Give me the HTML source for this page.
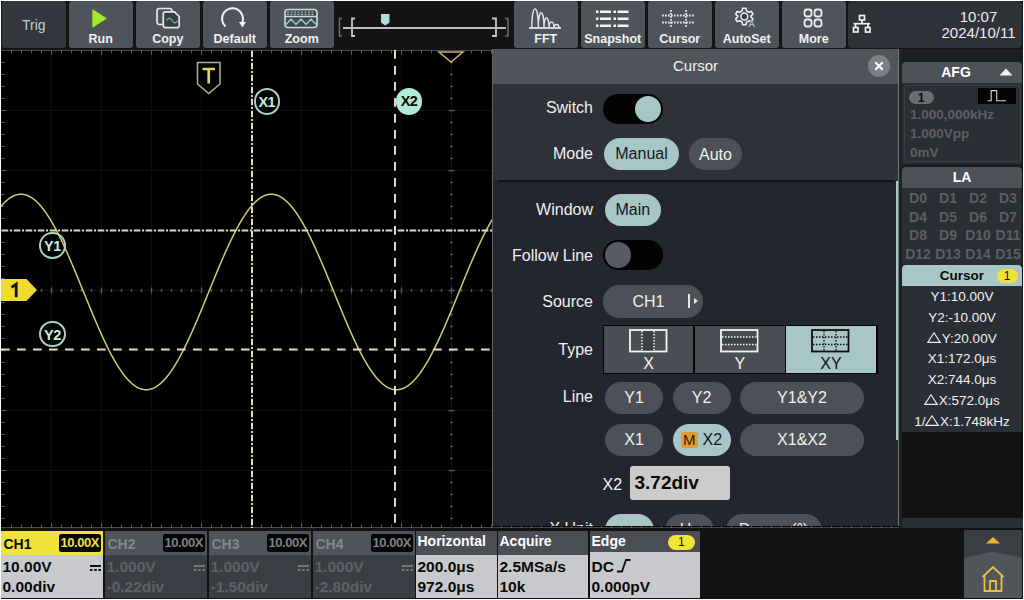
<!DOCTYPE html>
<html><head><meta charset="utf-8">
<style>
*{margin:0;padding:0;box-sizing:border-box}
html,body{width:1024px;height:600px;background:#fff;overflow:hidden}
body{font-family:"Liberation Sans",sans-serif;position:relative}
.a{position:absolute}
#root{position:absolute;left:1px;top:1px;width:1022px;height:598px;background:#121212;overflow:hidden}
.btn{position:absolute;top:1px;height:47px;width:63.5px;background:#4f535b;border-radius:3px;color:#f2f2f2;font-weight:bold;font-size:12.5px;text-align:center}
.btn .lb{position:absolute;left:0;right:0;top:31px;line-height:14px}
.btn svg{position:absolute;left:0;top:0}
.lbl{position:absolute;color:#f0f0f0;font-size:16px;text-align:right;line-height:18px}
.pill{position:absolute;height:32px;border-radius:16px;background:#4d5157;color:#f0f0f0;font-size:16px;text-align:center;line-height:32px}
.pill.on{background:#a9c6c6;color:#0f171c}
.mk{position:absolute;border-radius:50%;font-weight:bold;font-size:14.5px;text-align:center;letter-spacing:-0.5px}
.chp{position:absolute;top:531px;height:67px}
.chp .hd{position:absolute;left:0;right:0;top:0;height:24px;background:#50545a}
.chp .bd{position:absolute;left:0;right:0;top:24px;bottom:0;background:#3a3d43}
.chp .t{position:absolute;font-weight:bold;font-size:14px;line-height:16px;white-space:nowrap}
.chp .v{position:absolute;font-weight:bold;font-size:15.5px;line-height:17px;white-space:nowrap}
.rp{position:absolute;left:902px;width:120px}
.cv{position:absolute;left:902px;width:120px;text-align:center;color:#f0f0f0;font-size:13.5px;line-height:16px;white-space:nowrap}
.dl{position:absolute;font-weight:bold;font-size:14px;color:#5b5e63;text-align:center;width:30px;line-height:16px}
</style></head><body>
<div id="root"></div>
<!-- top toolbar -->
<div class="a" style="left:1px;top:1px;width:1022px;height:49px;background:#141414"></div>
<div class="btn" style="left:2px;background:#34373d;font-weight:normal;color:#b8d2cf;font-size:14px"><div class="lb" style="top:17px">Trig</div></div>
<div class="btn" style="left:69px">
<svg width="64" height="47"><path d="M23.8,8.8 L37.3,17.4 L23.8,26.2 Z" fill="#a4ea2c" stroke="#a4ea2c" stroke-width="0.8" stroke-linejoin="round"/></svg>
<div class="lb">Run</div></div>
<div class="btn" style="left:136px">
<svg width="64" height="47"><path d="M27,23.5 H23.5 a2.5,2.5 0 0 1 -2.5,-2.5 V10 a2.5,2.5 0 0 1 2.5,-2.5 H33.5 a2.5,2.5 0 0 1 2.5,2.5 V10.8" fill="none" stroke="#e6e6e6" stroke-width="1.7"/><path d="M29.5,10.8 H38.5 L43.2,15.5 V24.5 a2.2,2.2 0 0 1 -2.2,2.2 H29.5 a2.2,2.2 0 0 1 -2.2,-2.2 V13 a2.2,2.2 0 0 1 2.2,-2.2 Z" fill="#33403f" stroke="#e6e6e6" stroke-width="1.7"/><path d="M30.5,19.5 q2.8,-4.5 5.6,0 t5.6,0" fill="none" stroke="#7fa8a4" stroke-width="1.3"/></svg>
<div class="lb">Copy</div></div>
<div class="btn" style="left:203px">
<svg width="64" height="47"><path d="M22.5,25.5 A10.5,10.5 0 1 1 39.3,21.5" fill="none" stroke="#f2f2f2" stroke-width="2"/><path d="M36,21 L43,21 L39.5,26.5 Z" fill="#f2f2f2"/></svg>
<div class="lb">Default</div></div>
<div class="btn" style="left:270px">
<svg width="64" height="47"><rect x="15" y="8.5" width="32" height="18" rx="3" fill="#3b4a4c" stroke="#cddada" stroke-width="1.6"/><line x1="15" y1="15.5" x2="47" y2="15.5" stroke="#cddada" stroke-width="1.5"/><line x1="17" y1="11.2" x2="45" y2="11.2" stroke="#9fb0b0" stroke-width="1.2" stroke-dasharray="2 1.5"/><line x1="17" y1="13.4" x2="45" y2="13.4" stroke="#9fb0b0" stroke-width="1.2" stroke-dasharray="2 1.5"/><path d="M16,23.5 L21,18 L26,23.5 L31,18 L36,23.5 L41,18 L46,23.5" fill="none" stroke="#9cc8c4" stroke-width="1.5"/></svg>
<div class="lb">Zoom</div></div>
<!-- slider -->
<svg class="a" style="left:336px;top:1px" width="176" height="47">
<path d="M6,17.5 H3.5 V35 H6" fill="none" stroke="#6b6b6b" stroke-width="1.5"/>
<path d="M19,17.5 H16 V35 H19" fill="none" stroke="#c8c8c8" stroke-width="1.8"/>
<path d="M156,17.5 H160 V35 H156" fill="none" stroke="#c8c8c8" stroke-width="1.8"/>
<path d="M169,17.5 H172 V35 H169" fill="none" stroke="#6b6b6b" stroke-width="1.5"/>
<line x1="7" y1="27" x2="170" y2="27" stroke="#bdbdbd" stroke-width="2"/>
<path d="M45,13 H53.5 V21.5 L49.2,24.5 L45,21.5 Z" fill="#a9e0d8"/>
</svg>
<div class="btn" style="left:514px">
<svg width="64" height="47"><line x1="15" y1="27" x2="47" y2="27" stroke="#dfe4e4" stroke-width="1.8"/><path d="M17.8,27 C17.8,1.5 24.3,1.5 24.3,27 C24.3,6.6 30,6.6 30,27 C30,13.3 35,13.3 35,27 C35,19.0 40,19.0 40,27 C40,22.3 45,22.3 45,27 " fill="none" stroke="#dfe4e4" stroke-width="1.4"/></svg>
<div class="lb">FFT</div></div>
<div class="btn" style="left:581px">
<svg width="64" height="47"><g fill="#f4f4f4"><rect x="15" y="9.5" width="2.5" height="2.5"/><rect x="19" y="9.5" width="11" height="2.5"/><rect x="32.5" y="9.5" width="2.5" height="2.5"/><rect x="36.5" y="9.5" width="11" height="2.5"/><rect x="15" y="16.5" width="2.5" height="2.5"/><rect x="19" y="16.5" width="11" height="2.5"/><rect x="32.5" y="16.5" width="2.5" height="2.5"/><rect x="36.5" y="16.5" width="11" height="2.5"/><rect x="15" y="23.5" width="2.5" height="2.5"/><rect x="19" y="23.5" width="11" height="2.5"/><rect x="32.5" y="23.5" width="2.5" height="2.5"/><rect x="36.5" y="23.5" width="11" height="2.5"/></g></svg>
<div class="lb">Snapshot</div></div>
<div class="btn" style="left:648px">
<svg width="64" height="47"><g stroke="#dfe6e6" stroke-width="1.8" stroke-dasharray="1.8 1.2"><line x1="14" y1="14.5" x2="47" y2="14.5"/><line x1="14" y1="21.5" x2="47" y2="21.5"/><line x1="23" y1="9" x2="23" y2="27"/><line x1="38" y1="9" x2="38" y2="27"/></g></svg>
<div class="lb">Cursor</div></div>
<div class="btn" style="left:715px">
<svg width="64" height="47"><g transform="translate(29.3,15.5)"><path d="M-1.6,-8.2 L1.6,-8.2 L2.3,-5.6 L4.6,-4.3 L7.1,-5.1 L8.7,-2.4 L6.7,-0.6 L6.7,0.6 L8.7,2.4 L7.1,5.1 L4.6,4.3 L2.3,5.6 L1.6,8.2 L-1.6,8.2 L-2.3,5.6 L-4.6,4.3 L-7.1,5.1 L-8.7,2.4 L-6.7,0.6 L-6.7,-0.6 L-8.7,-2.4 L-7.1,-5.1 L-4.6,-4.3 L-2.3,-5.6 Z" fill="none" stroke="#ececec" stroke-width="1.6" stroke-linejoin="round"/><circle r="3.4" fill="#3a3d42" stroke="#ececec" stroke-width="1.5"/></g><text x="33.3" y="26.2" font-family="Liberation Sans" font-weight="bold" font-size="9.5" fill="#8fd8c0" stroke="#3a3d42" stroke-width="0.6" paint-order="stroke">A</text></svg>
<div class="lb">AutoSet</div></div>
<div class="btn" style="left:782px">
<svg width="64" height="47"><g fill="none" stroke="#ececec" stroke-width="1.8"><rect x="22.5" y="8.5" width="7" height="7" rx="2.5"/><rect x="32.5" y="8.5" width="7" height="7" rx="2.5"/><rect x="22.5" y="18.5" width="7" height="7" rx="2.5"/><rect x="32.5" y="18.5" width="7" height="7" rx="2.5"/></g></svg>
<div class="lb">More</div></div>
<div class="a" style="left:848px;top:1px;width:173.5px;height:47px;background:#2f3238;border-radius:4px">
<svg class="a" style="left:0;top:0" width="40" height="47"><g fill="none" stroke="#f0f0f0" stroke-width="1.7"><rect x="11.5" y="14.5" width="5" height="4.5"/><line x1="14" y1="19" x2="14" y2="22.7"/><line x1="5.5" y1="22.7" x2="22" y2="22.7"/><line x1="7.5" y1="22.7" x2="7.5" y2="26.5"/><line x1="20" y1="22.7" x2="20" y2="26.5"/><rect x="5.5" y="26.5" width="4.5" height="4.5"/><rect x="17.5" y="26.5" width="4.5" height="4.5"/></g></svg>
<div class="a" style="left:80px;width:101px;top:8px;color:#ececec;font-size:15px;line-height:16px;text-align:center">10:07<br>2024/10/11</div>
</div>

<!-- grid -->
<div class="a" style="left:1px;top:50px;width:900px;height:478px;background:#000"></div>
<svg width="900" height="478" style="position:absolute;left:1px;top:50px">
<line x1="50.5" y1="0" x2="50.5" y2="478" stroke="#0e0e0e" stroke-width="1"/>
<line x1="100.5" y1="0" x2="100.5" y2="478" stroke="#0e0e0e" stroke-width="1"/>
<line x1="150.5" y1="0" x2="150.5" y2="478" stroke="#0e0e0e" stroke-width="1"/>
<line x1="200.5" y1="0" x2="200.5" y2="478" stroke="#0e0e0e" stroke-width="1"/>
<line x1="250.5" y1="0" x2="250.5" y2="478" stroke="#0e0e0e" stroke-width="1"/>
<line x1="300.5" y1="0" x2="300.5" y2="478" stroke="#0e0e0e" stroke-width="1"/>
<line x1="350.5" y1="0" x2="350.5" y2="478" stroke="#0e0e0e" stroke-width="1"/>
<line x1="400.5" y1="0" x2="400.5" y2="478" stroke="#0e0e0e" stroke-width="1"/>
<line x1="450.5" y1="0" x2="450.5" y2="478" stroke="#0e0e0e" stroke-width="1"/>
<line x1="500.5" y1="0" x2="500.5" y2="478" stroke="#0e0e0e" stroke-width="1"/>
<line x1="550.5" y1="0" x2="550.5" y2="478" stroke="#0e0e0e" stroke-width="1"/>
<line x1="600.5" y1="0" x2="600.5" y2="478" stroke="#0e0e0e" stroke-width="1"/>
<line x1="650.5" y1="0" x2="650.5" y2="478" stroke="#0e0e0e" stroke-width="1"/>
<line x1="700.5" y1="0" x2="700.5" y2="478" stroke="#0e0e0e" stroke-width="1"/>
<line x1="750.5" y1="0" x2="750.5" y2="478" stroke="#0e0e0e" stroke-width="1"/>
<line x1="800.5" y1="0" x2="800.5" y2="478" stroke="#0e0e0e" stroke-width="1"/>
<line x1="850.5" y1="0" x2="850.5" y2="478" stroke="#0e0e0e" stroke-width="1"/>
<line x1="0" y1="60.5" x2="900" y2="60.5" stroke="#0e0e0e" stroke-width="1"/>
<line x1="0" y1="120.5" x2="900" y2="120.5" stroke="#0e0e0e" stroke-width="1"/>
<line x1="0" y1="180.5" x2="900" y2="180.5" stroke="#0e0e0e" stroke-width="1"/>
<line x1="0" y1="240.5" x2="900" y2="240.5" stroke="#0e0e0e" stroke-width="1"/>
<line x1="0" y1="300.5" x2="900" y2="300.5" stroke="#0e0e0e" stroke-width="1"/>
<line x1="0" y1="360.5" x2="900" y2="360.5" stroke="#0e0e0e" stroke-width="1"/>
<line x1="0" y1="420.5" x2="900" y2="420.5" stroke="#0e0e0e" stroke-width="1"/>
<line x1="0" y1="0.5" x2="900" y2="0.5" stroke="#4a4a4a" stroke-width="1"/>
<line x1="0" y1="477.5" x2="900" y2="477.5" stroke="#4a4a4a" stroke-width="1"/>
<line x1="899.5" y1="0" x2="899.5" y2="478" stroke="#4a4a4a" stroke-width="1"/>
<line x1="10.5" y1="0" x2="10.5" y2="3.5" stroke="#5c5c5c" stroke-width="1"/>
<line x1="10.5" y1="478" x2="10.5" y2="474.5" stroke="#5c5c5c" stroke-width="1"/>
<line x1="20.5" y1="0" x2="20.5" y2="3.5" stroke="#5c5c5c" stroke-width="1"/>
<line x1="20.5" y1="478" x2="20.5" y2="474.5" stroke="#5c5c5c" stroke-width="1"/>
<line x1="30.5" y1="0" x2="30.5" y2="3.5" stroke="#5c5c5c" stroke-width="1"/>
<line x1="30.5" y1="478" x2="30.5" y2="474.5" stroke="#5c5c5c" stroke-width="1"/>
<line x1="40.5" y1="0" x2="40.5" y2="3.5" stroke="#5c5c5c" stroke-width="1"/>
<line x1="40.5" y1="478" x2="40.5" y2="474.5" stroke="#5c5c5c" stroke-width="1"/>
<line x1="50.5" y1="0" x2="50.5" y2="5" stroke="#5c5c5c" stroke-width="1"/>
<line x1="50.5" y1="478" x2="50.5" y2="473" stroke="#5c5c5c" stroke-width="1"/>
<line x1="60.5" y1="0" x2="60.5" y2="3.5" stroke="#5c5c5c" stroke-width="1"/>
<line x1="60.5" y1="478" x2="60.5" y2="474.5" stroke="#5c5c5c" stroke-width="1"/>
<line x1="70.5" y1="0" x2="70.5" y2="3.5" stroke="#5c5c5c" stroke-width="1"/>
<line x1="70.5" y1="478" x2="70.5" y2="474.5" stroke="#5c5c5c" stroke-width="1"/>
<line x1="80.5" y1="0" x2="80.5" y2="3.5" stroke="#5c5c5c" stroke-width="1"/>
<line x1="80.5" y1="478" x2="80.5" y2="474.5" stroke="#5c5c5c" stroke-width="1"/>
<line x1="90.5" y1="0" x2="90.5" y2="3.5" stroke="#5c5c5c" stroke-width="1"/>
<line x1="90.5" y1="478" x2="90.5" y2="474.5" stroke="#5c5c5c" stroke-width="1"/>
<line x1="100.5" y1="0" x2="100.5" y2="5" stroke="#5c5c5c" stroke-width="1"/>
<line x1="100.5" y1="478" x2="100.5" y2="473" stroke="#5c5c5c" stroke-width="1"/>
<line x1="110.5" y1="0" x2="110.5" y2="3.5" stroke="#5c5c5c" stroke-width="1"/>
<line x1="110.5" y1="478" x2="110.5" y2="474.5" stroke="#5c5c5c" stroke-width="1"/>
<line x1="120.5" y1="0" x2="120.5" y2="3.5" stroke="#5c5c5c" stroke-width="1"/>
<line x1="120.5" y1="478" x2="120.5" y2="474.5" stroke="#5c5c5c" stroke-width="1"/>
<line x1="130.5" y1="0" x2="130.5" y2="3.5" stroke="#5c5c5c" stroke-width="1"/>
<line x1="130.5" y1="478" x2="130.5" y2="474.5" stroke="#5c5c5c" stroke-width="1"/>
<line x1="140.5" y1="0" x2="140.5" y2="3.5" stroke="#5c5c5c" stroke-width="1"/>
<line x1="140.5" y1="478" x2="140.5" y2="474.5" stroke="#5c5c5c" stroke-width="1"/>
<line x1="150.5" y1="0" x2="150.5" y2="5" stroke="#5c5c5c" stroke-width="1"/>
<line x1="150.5" y1="478" x2="150.5" y2="473" stroke="#5c5c5c" stroke-width="1"/>
<line x1="160.5" y1="0" x2="160.5" y2="3.5" stroke="#5c5c5c" stroke-width="1"/>
<line x1="160.5" y1="478" x2="160.5" y2="474.5" stroke="#5c5c5c" stroke-width="1"/>
<line x1="170.5" y1="0" x2="170.5" y2="3.5" stroke="#5c5c5c" stroke-width="1"/>
<line x1="170.5" y1="478" x2="170.5" y2="474.5" stroke="#5c5c5c" stroke-width="1"/>
<line x1="180.5" y1="0" x2="180.5" y2="3.5" stroke="#5c5c5c" stroke-width="1"/>
<line x1="180.5" y1="478" x2="180.5" y2="474.5" stroke="#5c5c5c" stroke-width="1"/>
<line x1="190.5" y1="0" x2="190.5" y2="3.5" stroke="#5c5c5c" stroke-width="1"/>
<line x1="190.5" y1="478" x2="190.5" y2="474.5" stroke="#5c5c5c" stroke-width="1"/>
<line x1="200.5" y1="0" x2="200.5" y2="5" stroke="#5c5c5c" stroke-width="1"/>
<line x1="200.5" y1="478" x2="200.5" y2="473" stroke="#5c5c5c" stroke-width="1"/>
<line x1="210.5" y1="0" x2="210.5" y2="3.5" stroke="#5c5c5c" stroke-width="1"/>
<line x1="210.5" y1="478" x2="210.5" y2="474.5" stroke="#5c5c5c" stroke-width="1"/>
<line x1="220.5" y1="0" x2="220.5" y2="3.5" stroke="#5c5c5c" stroke-width="1"/>
<line x1="220.5" y1="478" x2="220.5" y2="474.5" stroke="#5c5c5c" stroke-width="1"/>
<line x1="230.5" y1="0" x2="230.5" y2="3.5" stroke="#5c5c5c" stroke-width="1"/>
<line x1="230.5" y1="478" x2="230.5" y2="474.5" stroke="#5c5c5c" stroke-width="1"/>
<line x1="240.5" y1="0" x2="240.5" y2="3.5" stroke="#5c5c5c" stroke-width="1"/>
<line x1="240.5" y1="478" x2="240.5" y2="474.5" stroke="#5c5c5c" stroke-width="1"/>
<line x1="250.5" y1="0" x2="250.5" y2="5" stroke="#5c5c5c" stroke-width="1"/>
<line x1="250.5" y1="478" x2="250.5" y2="473" stroke="#5c5c5c" stroke-width="1"/>
<line x1="260.5" y1="0" x2="260.5" y2="3.5" stroke="#5c5c5c" stroke-width="1"/>
<line x1="260.5" y1="478" x2="260.5" y2="474.5" stroke="#5c5c5c" stroke-width="1"/>
<line x1="270.5" y1="0" x2="270.5" y2="3.5" stroke="#5c5c5c" stroke-width="1"/>
<line x1="270.5" y1="478" x2="270.5" y2="474.5" stroke="#5c5c5c" stroke-width="1"/>
<line x1="280.5" y1="0" x2="280.5" y2="3.5" stroke="#5c5c5c" stroke-width="1"/>
<line x1="280.5" y1="478" x2="280.5" y2="474.5" stroke="#5c5c5c" stroke-width="1"/>
<line x1="290.5" y1="0" x2="290.5" y2="3.5" stroke="#5c5c5c" stroke-width="1"/>
<line x1="290.5" y1="478" x2="290.5" y2="474.5" stroke="#5c5c5c" stroke-width="1"/>
<line x1="300.5" y1="0" x2="300.5" y2="5" stroke="#5c5c5c" stroke-width="1"/>
<line x1="300.5" y1="478" x2="300.5" y2="473" stroke="#5c5c5c" stroke-width="1"/>
<line x1="310.5" y1="0" x2="310.5" y2="3.5" stroke="#5c5c5c" stroke-width="1"/>
<line x1="310.5" y1="478" x2="310.5" y2="474.5" stroke="#5c5c5c" stroke-width="1"/>
<line x1="320.5" y1="0" x2="320.5" y2="3.5" stroke="#5c5c5c" stroke-width="1"/>
<line x1="320.5" y1="478" x2="320.5" y2="474.5" stroke="#5c5c5c" stroke-width="1"/>
<line x1="330.5" y1="0" x2="330.5" y2="3.5" stroke="#5c5c5c" stroke-width="1"/>
<line x1="330.5" y1="478" x2="330.5" y2="474.5" stroke="#5c5c5c" stroke-width="1"/>
<line x1="340.5" y1="0" x2="340.5" y2="3.5" stroke="#5c5c5c" stroke-width="1"/>
<line x1="340.5" y1="478" x2="340.5" y2="474.5" stroke="#5c5c5c" stroke-width="1"/>
<line x1="350.5" y1="0" x2="350.5" y2="5" stroke="#5c5c5c" stroke-width="1"/>
<line x1="350.5" y1="478" x2="350.5" y2="473" stroke="#5c5c5c" stroke-width="1"/>
<line x1="360.5" y1="0" x2="360.5" y2="3.5" stroke="#5c5c5c" stroke-width="1"/>
<line x1="360.5" y1="478" x2="360.5" y2="474.5" stroke="#5c5c5c" stroke-width="1"/>
<line x1="370.5" y1="0" x2="370.5" y2="3.5" stroke="#5c5c5c" stroke-width="1"/>
<line x1="370.5" y1="478" x2="370.5" y2="474.5" stroke="#5c5c5c" stroke-width="1"/>
<line x1="380.5" y1="0" x2="380.5" y2="3.5" stroke="#5c5c5c" stroke-width="1"/>
<line x1="380.5" y1="478" x2="380.5" y2="474.5" stroke="#5c5c5c" stroke-width="1"/>
<line x1="390.5" y1="0" x2="390.5" y2="3.5" stroke="#5c5c5c" stroke-width="1"/>
<line x1="390.5" y1="478" x2="390.5" y2="474.5" stroke="#5c5c5c" stroke-width="1"/>
<line x1="400.5" y1="0" x2="400.5" y2="5" stroke="#5c5c5c" stroke-width="1"/>
<line x1="400.5" y1="478" x2="400.5" y2="473" stroke="#5c5c5c" stroke-width="1"/>
<line x1="410.5" y1="0" x2="410.5" y2="3.5" stroke="#5c5c5c" stroke-width="1"/>
<line x1="410.5" y1="478" x2="410.5" y2="474.5" stroke="#5c5c5c" stroke-width="1"/>
<line x1="420.5" y1="0" x2="420.5" y2="3.5" stroke="#5c5c5c" stroke-width="1"/>
<line x1="420.5" y1="478" x2="420.5" y2="474.5" stroke="#5c5c5c" stroke-width="1"/>
<line x1="430.5" y1="0" x2="430.5" y2="3.5" stroke="#5c5c5c" stroke-width="1"/>
<line x1="430.5" y1="478" x2="430.5" y2="474.5" stroke="#5c5c5c" stroke-width="1"/>
<line x1="440.5" y1="0" x2="440.5" y2="3.5" stroke="#5c5c5c" stroke-width="1"/>
<line x1="440.5" y1="478" x2="440.5" y2="474.5" stroke="#5c5c5c" stroke-width="1"/>
<line x1="450.5" y1="0" x2="450.5" y2="5" stroke="#5c5c5c" stroke-width="1"/>
<line x1="450.5" y1="478" x2="450.5" y2="473" stroke="#5c5c5c" stroke-width="1"/>
<line x1="460.5" y1="0" x2="460.5" y2="3.5" stroke="#5c5c5c" stroke-width="1"/>
<line x1="460.5" y1="478" x2="460.5" y2="474.5" stroke="#5c5c5c" stroke-width="1"/>
<line x1="470.5" y1="0" x2="470.5" y2="3.5" stroke="#5c5c5c" stroke-width="1"/>
<line x1="470.5" y1="478" x2="470.5" y2="474.5" stroke="#5c5c5c" stroke-width="1"/>
<line x1="480.5" y1="0" x2="480.5" y2="3.5" stroke="#5c5c5c" stroke-width="1"/>
<line x1="480.5" y1="478" x2="480.5" y2="474.5" stroke="#5c5c5c" stroke-width="1"/>
<line x1="490.5" y1="0" x2="490.5" y2="3.5" stroke="#5c5c5c" stroke-width="1"/>
<line x1="490.5" y1="478" x2="490.5" y2="474.5" stroke="#5c5c5c" stroke-width="1"/>
<line x1="500.5" y1="0" x2="500.5" y2="5" stroke="#5c5c5c" stroke-width="1"/>
<line x1="500.5" y1="478" x2="500.5" y2="473" stroke="#5c5c5c" stroke-width="1"/>
<line x1="510.5" y1="0" x2="510.5" y2="3.5" stroke="#5c5c5c" stroke-width="1"/>
<line x1="510.5" y1="478" x2="510.5" y2="474.5" stroke="#5c5c5c" stroke-width="1"/>
<line x1="520.5" y1="0" x2="520.5" y2="3.5" stroke="#5c5c5c" stroke-width="1"/>
<line x1="520.5" y1="478" x2="520.5" y2="474.5" stroke="#5c5c5c" stroke-width="1"/>
<line x1="530.5" y1="0" x2="530.5" y2="3.5" stroke="#5c5c5c" stroke-width="1"/>
<line x1="530.5" y1="478" x2="530.5" y2="474.5" stroke="#5c5c5c" stroke-width="1"/>
<line x1="540.5" y1="0" x2="540.5" y2="3.5" stroke="#5c5c5c" stroke-width="1"/>
<line x1="540.5" y1="478" x2="540.5" y2="474.5" stroke="#5c5c5c" stroke-width="1"/>
<line x1="550.5" y1="0" x2="550.5" y2="5" stroke="#5c5c5c" stroke-width="1"/>
<line x1="550.5" y1="478" x2="550.5" y2="473" stroke="#5c5c5c" stroke-width="1"/>
<line x1="560.5" y1="0" x2="560.5" y2="3.5" stroke="#5c5c5c" stroke-width="1"/>
<line x1="560.5" y1="478" x2="560.5" y2="474.5" stroke="#5c5c5c" stroke-width="1"/>
<line x1="570.5" y1="0" x2="570.5" y2="3.5" stroke="#5c5c5c" stroke-width="1"/>
<line x1="570.5" y1="478" x2="570.5" y2="474.5" stroke="#5c5c5c" stroke-width="1"/>
<line x1="580.5" y1="0" x2="580.5" y2="3.5" stroke="#5c5c5c" stroke-width="1"/>
<line x1="580.5" y1="478" x2="580.5" y2="474.5" stroke="#5c5c5c" stroke-width="1"/>
<line x1="590.5" y1="0" x2="590.5" y2="3.5" stroke="#5c5c5c" stroke-width="1"/>
<line x1="590.5" y1="478" x2="590.5" y2="474.5" stroke="#5c5c5c" stroke-width="1"/>
<line x1="600.5" y1="0" x2="600.5" y2="5" stroke="#5c5c5c" stroke-width="1"/>
<line x1="600.5" y1="478" x2="600.5" y2="473" stroke="#5c5c5c" stroke-width="1"/>
<line x1="610.5" y1="0" x2="610.5" y2="3.5" stroke="#5c5c5c" stroke-width="1"/>
<line x1="610.5" y1="478" x2="610.5" y2="474.5" stroke="#5c5c5c" stroke-width="1"/>
<line x1="620.5" y1="0" x2="620.5" y2="3.5" stroke="#5c5c5c" stroke-width="1"/>
<line x1="620.5" y1="478" x2="620.5" y2="474.5" stroke="#5c5c5c" stroke-width="1"/>
<line x1="630.5" y1="0" x2="630.5" y2="3.5" stroke="#5c5c5c" stroke-width="1"/>
<line x1="630.5" y1="478" x2="630.5" y2="474.5" stroke="#5c5c5c" stroke-width="1"/>
<line x1="640.5" y1="0" x2="640.5" y2="3.5" stroke="#5c5c5c" stroke-width="1"/>
<line x1="640.5" y1="478" x2="640.5" y2="474.5" stroke="#5c5c5c" stroke-width="1"/>
<line x1="650.5" y1="0" x2="650.5" y2="5" stroke="#5c5c5c" stroke-width="1"/>
<line x1="650.5" y1="478" x2="650.5" y2="473" stroke="#5c5c5c" stroke-width="1"/>
<line x1="660.5" y1="0" x2="660.5" y2="3.5" stroke="#5c5c5c" stroke-width="1"/>
<line x1="660.5" y1="478" x2="660.5" y2="474.5" stroke="#5c5c5c" stroke-width="1"/>
<line x1="670.5" y1="0" x2="670.5" y2="3.5" stroke="#5c5c5c" stroke-width="1"/>
<line x1="670.5" y1="478" x2="670.5" y2="474.5" stroke="#5c5c5c" stroke-width="1"/>
<line x1="680.5" y1="0" x2="680.5" y2="3.5" stroke="#5c5c5c" stroke-width="1"/>
<line x1="680.5" y1="478" x2="680.5" y2="474.5" stroke="#5c5c5c" stroke-width="1"/>
<line x1="690.5" y1="0" x2="690.5" y2="3.5" stroke="#5c5c5c" stroke-width="1"/>
<line x1="690.5" y1="478" x2="690.5" y2="474.5" stroke="#5c5c5c" stroke-width="1"/>
<line x1="700.5" y1="0" x2="700.5" y2="5" stroke="#5c5c5c" stroke-width="1"/>
<line x1="700.5" y1="478" x2="700.5" y2="473" stroke="#5c5c5c" stroke-width="1"/>
<line x1="710.5" y1="0" x2="710.5" y2="3.5" stroke="#5c5c5c" stroke-width="1"/>
<line x1="710.5" y1="478" x2="710.5" y2="474.5" stroke="#5c5c5c" stroke-width="1"/>
<line x1="720.5" y1="0" x2="720.5" y2="3.5" stroke="#5c5c5c" stroke-width="1"/>
<line x1="720.5" y1="478" x2="720.5" y2="474.5" stroke="#5c5c5c" stroke-width="1"/>
<line x1="730.5" y1="0" x2="730.5" y2="3.5" stroke="#5c5c5c" stroke-width="1"/>
<line x1="730.5" y1="478" x2="730.5" y2="474.5" stroke="#5c5c5c" stroke-width="1"/>
<line x1="740.5" y1="0" x2="740.5" y2="3.5" stroke="#5c5c5c" stroke-width="1"/>
<line x1="740.5" y1="478" x2="740.5" y2="474.5" stroke="#5c5c5c" stroke-width="1"/>
<line x1="750.5" y1="0" x2="750.5" y2="5" stroke="#5c5c5c" stroke-width="1"/>
<line x1="750.5" y1="478" x2="750.5" y2="473" stroke="#5c5c5c" stroke-width="1"/>
<line x1="760.5" y1="0" x2="760.5" y2="3.5" stroke="#5c5c5c" stroke-width="1"/>
<line x1="760.5" y1="478" x2="760.5" y2="474.5" stroke="#5c5c5c" stroke-width="1"/>
<line x1="770.5" y1="0" x2="770.5" y2="3.5" stroke="#5c5c5c" stroke-width="1"/>
<line x1="770.5" y1="478" x2="770.5" y2="474.5" stroke="#5c5c5c" stroke-width="1"/>
<line x1="780.5" y1="0" x2="780.5" y2="3.5" stroke="#5c5c5c" stroke-width="1"/>
<line x1="780.5" y1="478" x2="780.5" y2="474.5" stroke="#5c5c5c" stroke-width="1"/>
<line x1="790.5" y1="0" x2="790.5" y2="3.5" stroke="#5c5c5c" stroke-width="1"/>
<line x1="790.5" y1="478" x2="790.5" y2="474.5" stroke="#5c5c5c" stroke-width="1"/>
<line x1="800.5" y1="0" x2="800.5" y2="5" stroke="#5c5c5c" stroke-width="1"/>
<line x1="800.5" y1="478" x2="800.5" y2="473" stroke="#5c5c5c" stroke-width="1"/>
<line x1="810.5" y1="0" x2="810.5" y2="3.5" stroke="#5c5c5c" stroke-width="1"/>
<line x1="810.5" y1="478" x2="810.5" y2="474.5" stroke="#5c5c5c" stroke-width="1"/>
<line x1="820.5" y1="0" x2="820.5" y2="3.5" stroke="#5c5c5c" stroke-width="1"/>
<line x1="820.5" y1="478" x2="820.5" y2="474.5" stroke="#5c5c5c" stroke-width="1"/>
<line x1="830.5" y1="0" x2="830.5" y2="3.5" stroke="#5c5c5c" stroke-width="1"/>
<line x1="830.5" y1="478" x2="830.5" y2="474.5" stroke="#5c5c5c" stroke-width="1"/>
<line x1="840.5" y1="0" x2="840.5" y2="3.5" stroke="#5c5c5c" stroke-width="1"/>
<line x1="840.5" y1="478" x2="840.5" y2="474.5" stroke="#5c5c5c" stroke-width="1"/>
<line x1="850.5" y1="0" x2="850.5" y2="5" stroke="#5c5c5c" stroke-width="1"/>
<line x1="850.5" y1="478" x2="850.5" y2="473" stroke="#5c5c5c" stroke-width="1"/>
<line x1="860.5" y1="0" x2="860.5" y2="3.5" stroke="#5c5c5c" stroke-width="1"/>
<line x1="860.5" y1="478" x2="860.5" y2="474.5" stroke="#5c5c5c" stroke-width="1"/>
<line x1="870.5" y1="0" x2="870.5" y2="3.5" stroke="#5c5c5c" stroke-width="1"/>
<line x1="870.5" y1="478" x2="870.5" y2="474.5" stroke="#5c5c5c" stroke-width="1"/>
<line x1="880.5" y1="0" x2="880.5" y2="3.5" stroke="#5c5c5c" stroke-width="1"/>
<line x1="880.5" y1="478" x2="880.5" y2="474.5" stroke="#5c5c5c" stroke-width="1"/>
<line x1="890.5" y1="0" x2="890.5" y2="3.5" stroke="#5c5c5c" stroke-width="1"/>
<line x1="890.5" y1="478" x2="890.5" y2="474.5" stroke="#5c5c5c" stroke-width="1"/>
<line x1="0" y1="12.5" x2="3.5" y2="12.5" stroke="#5c5c5c" stroke-width="1"/>
<line x1="900" y1="12.5" x2="896.5" y2="12.5" stroke="#5c5c5c" stroke-width="1"/>
<line x1="0" y1="24.5" x2="3.5" y2="24.5" stroke="#5c5c5c" stroke-width="1"/>
<line x1="900" y1="24.5" x2="896.5" y2="24.5" stroke="#5c5c5c" stroke-width="1"/>
<line x1="0" y1="36.5" x2="3.5" y2="36.5" stroke="#5c5c5c" stroke-width="1"/>
<line x1="900" y1="36.5" x2="896.5" y2="36.5" stroke="#5c5c5c" stroke-width="1"/>
<line x1="0" y1="48.5" x2="3.5" y2="48.5" stroke="#5c5c5c" stroke-width="1"/>
<line x1="900" y1="48.5" x2="896.5" y2="48.5" stroke="#5c5c5c" stroke-width="1"/>
<line x1="0" y1="60.5" x2="5" y2="60.5" stroke="#5c5c5c" stroke-width="1"/>
<line x1="900" y1="60.5" x2="895" y2="60.5" stroke="#5c5c5c" stroke-width="1"/>
<line x1="0" y1="72.5" x2="3.5" y2="72.5" stroke="#5c5c5c" stroke-width="1"/>
<line x1="900" y1="72.5" x2="896.5" y2="72.5" stroke="#5c5c5c" stroke-width="1"/>
<line x1="0" y1="84.5" x2="3.5" y2="84.5" stroke="#5c5c5c" stroke-width="1"/>
<line x1="900" y1="84.5" x2="896.5" y2="84.5" stroke="#5c5c5c" stroke-width="1"/>
<line x1="0" y1="96.5" x2="3.5" y2="96.5" stroke="#5c5c5c" stroke-width="1"/>
<line x1="900" y1="96.5" x2="896.5" y2="96.5" stroke="#5c5c5c" stroke-width="1"/>
<line x1="0" y1="108.5" x2="3.5" y2="108.5" stroke="#5c5c5c" stroke-width="1"/>
<line x1="900" y1="108.5" x2="896.5" y2="108.5" stroke="#5c5c5c" stroke-width="1"/>
<line x1="0" y1="120.5" x2="5" y2="120.5" stroke="#5c5c5c" stroke-width="1"/>
<line x1="900" y1="120.5" x2="895" y2="120.5" stroke="#5c5c5c" stroke-width="1"/>
<line x1="0" y1="132.5" x2="3.5" y2="132.5" stroke="#5c5c5c" stroke-width="1"/>
<line x1="900" y1="132.5" x2="896.5" y2="132.5" stroke="#5c5c5c" stroke-width="1"/>
<line x1="0" y1="144.5" x2="3.5" y2="144.5" stroke="#5c5c5c" stroke-width="1"/>
<line x1="900" y1="144.5" x2="896.5" y2="144.5" stroke="#5c5c5c" stroke-width="1"/>
<line x1="0" y1="156.5" x2="3.5" y2="156.5" stroke="#5c5c5c" stroke-width="1"/>
<line x1="900" y1="156.5" x2="896.5" y2="156.5" stroke="#5c5c5c" stroke-width="1"/>
<line x1="0" y1="168.5" x2="3.5" y2="168.5" stroke="#5c5c5c" stroke-width="1"/>
<line x1="900" y1="168.5" x2="896.5" y2="168.5" stroke="#5c5c5c" stroke-width="1"/>
<line x1="0" y1="180.5" x2="5" y2="180.5" stroke="#5c5c5c" stroke-width="1"/>
<line x1="900" y1="180.5" x2="895" y2="180.5" stroke="#5c5c5c" stroke-width="1"/>
<line x1="0" y1="192.5" x2="3.5" y2="192.5" stroke="#5c5c5c" stroke-width="1"/>
<line x1="900" y1="192.5" x2="896.5" y2="192.5" stroke="#5c5c5c" stroke-width="1"/>
<line x1="0" y1="204.5" x2="3.5" y2="204.5" stroke="#5c5c5c" stroke-width="1"/>
<line x1="900" y1="204.5" x2="896.5" y2="204.5" stroke="#5c5c5c" stroke-width="1"/>
<line x1="0" y1="216.5" x2="3.5" y2="216.5" stroke="#5c5c5c" stroke-width="1"/>
<line x1="900" y1="216.5" x2="896.5" y2="216.5" stroke="#5c5c5c" stroke-width="1"/>
<line x1="0" y1="228.5" x2="3.5" y2="228.5" stroke="#5c5c5c" stroke-width="1"/>
<line x1="900" y1="228.5" x2="896.5" y2="228.5" stroke="#5c5c5c" stroke-width="1"/>
<line x1="0" y1="240.5" x2="5" y2="240.5" stroke="#5c5c5c" stroke-width="1"/>
<line x1="900" y1="240.5" x2="895" y2="240.5" stroke="#5c5c5c" stroke-width="1"/>
<line x1="0" y1="252.5" x2="3.5" y2="252.5" stroke="#5c5c5c" stroke-width="1"/>
<line x1="900" y1="252.5" x2="896.5" y2="252.5" stroke="#5c5c5c" stroke-width="1"/>
<line x1="0" y1="264.5" x2="3.5" y2="264.5" stroke="#5c5c5c" stroke-width="1"/>
<line x1="900" y1="264.5" x2="896.5" y2="264.5" stroke="#5c5c5c" stroke-width="1"/>
<line x1="0" y1="276.5" x2="3.5" y2="276.5" stroke="#5c5c5c" stroke-width="1"/>
<line x1="900" y1="276.5" x2="896.5" y2="276.5" stroke="#5c5c5c" stroke-width="1"/>
<line x1="0" y1="288.5" x2="3.5" y2="288.5" stroke="#5c5c5c" stroke-width="1"/>
<line x1="900" y1="288.5" x2="896.5" y2="288.5" stroke="#5c5c5c" stroke-width="1"/>
<line x1="0" y1="300.5" x2="5" y2="300.5" stroke="#5c5c5c" stroke-width="1"/>
<line x1="900" y1="300.5" x2="895" y2="300.5" stroke="#5c5c5c" stroke-width="1"/>
<line x1="0" y1="312.5" x2="3.5" y2="312.5" stroke="#5c5c5c" stroke-width="1"/>
<line x1="900" y1="312.5" x2="896.5" y2="312.5" stroke="#5c5c5c" stroke-width="1"/>
<line x1="0" y1="324.5" x2="3.5" y2="324.5" stroke="#5c5c5c" stroke-width="1"/>
<line x1="900" y1="324.5" x2="896.5" y2="324.5" stroke="#5c5c5c" stroke-width="1"/>
<line x1="0" y1="336.5" x2="3.5" y2="336.5" stroke="#5c5c5c" stroke-width="1"/>
<line x1="900" y1="336.5" x2="896.5" y2="336.5" stroke="#5c5c5c" stroke-width="1"/>
<line x1="0" y1="348.5" x2="3.5" y2="348.5" stroke="#5c5c5c" stroke-width="1"/>
<line x1="900" y1="348.5" x2="896.5" y2="348.5" stroke="#5c5c5c" stroke-width="1"/>
<line x1="0" y1="360.5" x2="5" y2="360.5" stroke="#5c5c5c" stroke-width="1"/>
<line x1="900" y1="360.5" x2="895" y2="360.5" stroke="#5c5c5c" stroke-width="1"/>
<line x1="0" y1="372.5" x2="3.5" y2="372.5" stroke="#5c5c5c" stroke-width="1"/>
<line x1="900" y1="372.5" x2="896.5" y2="372.5" stroke="#5c5c5c" stroke-width="1"/>
<line x1="0" y1="384.5" x2="3.5" y2="384.5" stroke="#5c5c5c" stroke-width="1"/>
<line x1="900" y1="384.5" x2="896.5" y2="384.5" stroke="#5c5c5c" stroke-width="1"/>
<line x1="0" y1="396.5" x2="3.5" y2="396.5" stroke="#5c5c5c" stroke-width="1"/>
<line x1="900" y1="396.5" x2="896.5" y2="396.5" stroke="#5c5c5c" stroke-width="1"/>
<line x1="0" y1="408.5" x2="3.5" y2="408.5" stroke="#5c5c5c" stroke-width="1"/>
<line x1="900" y1="408.5" x2="896.5" y2="408.5" stroke="#5c5c5c" stroke-width="1"/>
<line x1="0" y1="420.5" x2="5" y2="420.5" stroke="#5c5c5c" stroke-width="1"/>
<line x1="900" y1="420.5" x2="895" y2="420.5" stroke="#5c5c5c" stroke-width="1"/>
<line x1="0" y1="432.5" x2="3.5" y2="432.5" stroke="#5c5c5c" stroke-width="1"/>
<line x1="900" y1="432.5" x2="896.5" y2="432.5" stroke="#5c5c5c" stroke-width="1"/>
<line x1="0" y1="444.5" x2="3.5" y2="444.5" stroke="#5c5c5c" stroke-width="1"/>
<line x1="900" y1="444.5" x2="896.5" y2="444.5" stroke="#5c5c5c" stroke-width="1"/>
<line x1="0" y1="456.5" x2="3.5" y2="456.5" stroke="#5c5c5c" stroke-width="1"/>
<line x1="900" y1="456.5" x2="896.5" y2="456.5" stroke="#5c5c5c" stroke-width="1"/>
<line x1="0" y1="468.5" x2="3.5" y2="468.5" stroke="#5c5c5c" stroke-width="1"/>
<line x1="900" y1="468.5" x2="896.5" y2="468.5" stroke="#5c5c5c" stroke-width="1"/>
<line x1="0" y1="240.5" x2="900" y2="240.5" stroke="#161616" stroke-width="1"/>
<line x1="450.5" y1="0" x2="450.5" y2="478" stroke="#161616" stroke-width="1"/>
<line x1="10.5" y1="239.0" x2="10.5" y2="242.0" stroke="#555" stroke-width="1.5"/>
<line x1="20.5" y1="239.0" x2="20.5" y2="242.0" stroke="#555" stroke-width="1.5"/>
<line x1="30.5" y1="239.0" x2="30.5" y2="242.0" stroke="#555" stroke-width="1.5"/>
<line x1="40.5" y1="239.0" x2="40.5" y2="242.0" stroke="#555" stroke-width="1.5"/>
<line x1="50.5" y1="237.5" x2="50.5" y2="243.5" stroke="#555" stroke-width="1.5"/>
<line x1="60.5" y1="239.0" x2="60.5" y2="242.0" stroke="#555" stroke-width="1.5"/>
<line x1="70.5" y1="239.0" x2="70.5" y2="242.0" stroke="#555" stroke-width="1.5"/>
<line x1="80.5" y1="239.0" x2="80.5" y2="242.0" stroke="#555" stroke-width="1.5"/>
<line x1="90.5" y1="239.0" x2="90.5" y2="242.0" stroke="#555" stroke-width="1.5"/>
<line x1="100.5" y1="237.5" x2="100.5" y2="243.5" stroke="#555" stroke-width="1.5"/>
<line x1="110.5" y1="239.0" x2="110.5" y2="242.0" stroke="#555" stroke-width="1.5"/>
<line x1="120.5" y1="239.0" x2="120.5" y2="242.0" stroke="#555" stroke-width="1.5"/>
<line x1="130.5" y1="239.0" x2="130.5" y2="242.0" stroke="#555" stroke-width="1.5"/>
<line x1="140.5" y1="239.0" x2="140.5" y2="242.0" stroke="#555" stroke-width="1.5"/>
<line x1="150.5" y1="237.5" x2="150.5" y2="243.5" stroke="#555" stroke-width="1.5"/>
<line x1="160.5" y1="239.0" x2="160.5" y2="242.0" stroke="#555" stroke-width="1.5"/>
<line x1="170.5" y1="239.0" x2="170.5" y2="242.0" stroke="#555" stroke-width="1.5"/>
<line x1="180.5" y1="239.0" x2="180.5" y2="242.0" stroke="#555" stroke-width="1.5"/>
<line x1="190.5" y1="239.0" x2="190.5" y2="242.0" stroke="#555" stroke-width="1.5"/>
<line x1="200.5" y1="237.5" x2="200.5" y2="243.5" stroke="#555" stroke-width="1.5"/>
<line x1="210.5" y1="239.0" x2="210.5" y2="242.0" stroke="#555" stroke-width="1.5"/>
<line x1="220.5" y1="239.0" x2="220.5" y2="242.0" stroke="#555" stroke-width="1.5"/>
<line x1="230.5" y1="239.0" x2="230.5" y2="242.0" stroke="#555" stroke-width="1.5"/>
<line x1="240.5" y1="239.0" x2="240.5" y2="242.0" stroke="#555" stroke-width="1.5"/>
<line x1="250.5" y1="237.5" x2="250.5" y2="243.5" stroke="#555" stroke-width="1.5"/>
<line x1="260.5" y1="239.0" x2="260.5" y2="242.0" stroke="#555" stroke-width="1.5"/>
<line x1="270.5" y1="239.0" x2="270.5" y2="242.0" stroke="#555" stroke-width="1.5"/>
<line x1="280.5" y1="239.0" x2="280.5" y2="242.0" stroke="#555" stroke-width="1.5"/>
<line x1="290.5" y1="239.0" x2="290.5" y2="242.0" stroke="#555" stroke-width="1.5"/>
<line x1="300.5" y1="237.5" x2="300.5" y2="243.5" stroke="#555" stroke-width="1.5"/>
<line x1="310.5" y1="239.0" x2="310.5" y2="242.0" stroke="#555" stroke-width="1.5"/>
<line x1="320.5" y1="239.0" x2="320.5" y2="242.0" stroke="#555" stroke-width="1.5"/>
<line x1="330.5" y1="239.0" x2="330.5" y2="242.0" stroke="#555" stroke-width="1.5"/>
<line x1="340.5" y1="239.0" x2="340.5" y2="242.0" stroke="#555" stroke-width="1.5"/>
<line x1="350.5" y1="237.5" x2="350.5" y2="243.5" stroke="#555" stroke-width="1.5"/>
<line x1="360.5" y1="239.0" x2="360.5" y2="242.0" stroke="#555" stroke-width="1.5"/>
<line x1="370.5" y1="239.0" x2="370.5" y2="242.0" stroke="#555" stroke-width="1.5"/>
<line x1="380.5" y1="239.0" x2="380.5" y2="242.0" stroke="#555" stroke-width="1.5"/>
<line x1="390.5" y1="239.0" x2="390.5" y2="242.0" stroke="#555" stroke-width="1.5"/>
<line x1="400.5" y1="237.5" x2="400.5" y2="243.5" stroke="#555" stroke-width="1.5"/>
<line x1="410.5" y1="239.0" x2="410.5" y2="242.0" stroke="#555" stroke-width="1.5"/>
<line x1="420.5" y1="239.0" x2="420.5" y2="242.0" stroke="#555" stroke-width="1.5"/>
<line x1="430.5" y1="239.0" x2="430.5" y2="242.0" stroke="#555" stroke-width="1.5"/>
<line x1="440.5" y1="239.0" x2="440.5" y2="242.0" stroke="#555" stroke-width="1.5"/>
<line x1="450.5" y1="237.5" x2="450.5" y2="243.5" stroke="#555" stroke-width="1.5"/>
<line x1="460.5" y1="239.0" x2="460.5" y2="242.0" stroke="#555" stroke-width="1.5"/>
<line x1="470.5" y1="239.0" x2="470.5" y2="242.0" stroke="#555" stroke-width="1.5"/>
<line x1="480.5" y1="239.0" x2="480.5" y2="242.0" stroke="#555" stroke-width="1.5"/>
<line x1="490.5" y1="239.0" x2="490.5" y2="242.0" stroke="#555" stroke-width="1.5"/>
<line x1="500.5" y1="237.5" x2="500.5" y2="243.5" stroke="#555" stroke-width="1.5"/>
<line x1="510.5" y1="239.0" x2="510.5" y2="242.0" stroke="#555" stroke-width="1.5"/>
<line x1="520.5" y1="239.0" x2="520.5" y2="242.0" stroke="#555" stroke-width="1.5"/>
<line x1="530.5" y1="239.0" x2="530.5" y2="242.0" stroke="#555" stroke-width="1.5"/>
<line x1="540.5" y1="239.0" x2="540.5" y2="242.0" stroke="#555" stroke-width="1.5"/>
<line x1="550.5" y1="237.5" x2="550.5" y2="243.5" stroke="#555" stroke-width="1.5"/>
<line x1="560.5" y1="239.0" x2="560.5" y2="242.0" stroke="#555" stroke-width="1.5"/>
<line x1="570.5" y1="239.0" x2="570.5" y2="242.0" stroke="#555" stroke-width="1.5"/>
<line x1="580.5" y1="239.0" x2="580.5" y2="242.0" stroke="#555" stroke-width="1.5"/>
<line x1="590.5" y1="239.0" x2="590.5" y2="242.0" stroke="#555" stroke-width="1.5"/>
<line x1="600.5" y1="237.5" x2="600.5" y2="243.5" stroke="#555" stroke-width="1.5"/>
<line x1="610.5" y1="239.0" x2="610.5" y2="242.0" stroke="#555" stroke-width="1.5"/>
<line x1="620.5" y1="239.0" x2="620.5" y2="242.0" stroke="#555" stroke-width="1.5"/>
<line x1="630.5" y1="239.0" x2="630.5" y2="242.0" stroke="#555" stroke-width="1.5"/>
<line x1="640.5" y1="239.0" x2="640.5" y2="242.0" stroke="#555" stroke-width="1.5"/>
<line x1="650.5" y1="237.5" x2="650.5" y2="243.5" stroke="#555" stroke-width="1.5"/>
<line x1="660.5" y1="239.0" x2="660.5" y2="242.0" stroke="#555" stroke-width="1.5"/>
<line x1="670.5" y1="239.0" x2="670.5" y2="242.0" stroke="#555" stroke-width="1.5"/>
<line x1="680.5" y1="239.0" x2="680.5" y2="242.0" stroke="#555" stroke-width="1.5"/>
<line x1="690.5" y1="239.0" x2="690.5" y2="242.0" stroke="#555" stroke-width="1.5"/>
<line x1="700.5" y1="237.5" x2="700.5" y2="243.5" stroke="#555" stroke-width="1.5"/>
<line x1="710.5" y1="239.0" x2="710.5" y2="242.0" stroke="#555" stroke-width="1.5"/>
<line x1="720.5" y1="239.0" x2="720.5" y2="242.0" stroke="#555" stroke-width="1.5"/>
<line x1="730.5" y1="239.0" x2="730.5" y2="242.0" stroke="#555" stroke-width="1.5"/>
<line x1="740.5" y1="239.0" x2="740.5" y2="242.0" stroke="#555" stroke-width="1.5"/>
<line x1="750.5" y1="237.5" x2="750.5" y2="243.5" stroke="#555" stroke-width="1.5"/>
<line x1="760.5" y1="239.0" x2="760.5" y2="242.0" stroke="#555" stroke-width="1.5"/>
<line x1="770.5" y1="239.0" x2="770.5" y2="242.0" stroke="#555" stroke-width="1.5"/>
<line x1="780.5" y1="239.0" x2="780.5" y2="242.0" stroke="#555" stroke-width="1.5"/>
<line x1="790.5" y1="239.0" x2="790.5" y2="242.0" stroke="#555" stroke-width="1.5"/>
<line x1="800.5" y1="237.5" x2="800.5" y2="243.5" stroke="#555" stroke-width="1.5"/>
<line x1="810.5" y1="239.0" x2="810.5" y2="242.0" stroke="#555" stroke-width="1.5"/>
<line x1="820.5" y1="239.0" x2="820.5" y2="242.0" stroke="#555" stroke-width="1.5"/>
<line x1="830.5" y1="239.0" x2="830.5" y2="242.0" stroke="#555" stroke-width="1.5"/>
<line x1="840.5" y1="239.0" x2="840.5" y2="242.0" stroke="#555" stroke-width="1.5"/>
<line x1="850.5" y1="237.5" x2="850.5" y2="243.5" stroke="#555" stroke-width="1.5"/>
<line x1="860.5" y1="239.0" x2="860.5" y2="242.0" stroke="#555" stroke-width="1.5"/>
<line x1="870.5" y1="239.0" x2="870.5" y2="242.0" stroke="#555" stroke-width="1.5"/>
<line x1="880.5" y1="239.0" x2="880.5" y2="242.0" stroke="#555" stroke-width="1.5"/>
<line x1="890.5" y1="239.0" x2="890.5" y2="242.0" stroke="#555" stroke-width="1.5"/>
<line x1="449.0" y1="12.5" x2="452.0" y2="12.5" stroke="#555" stroke-width="1.5"/>
<line x1="449.0" y1="24.5" x2="452.0" y2="24.5" stroke="#555" stroke-width="1.5"/>
<line x1="449.0" y1="36.5" x2="452.0" y2="36.5" stroke="#555" stroke-width="1.5"/>
<line x1="449.0" y1="48.5" x2="452.0" y2="48.5" stroke="#555" stroke-width="1.5"/>
<line x1="447.5" y1="60.5" x2="453.5" y2="60.5" stroke="#555" stroke-width="1.5"/>
<line x1="449.0" y1="72.5" x2="452.0" y2="72.5" stroke="#555" stroke-width="1.5"/>
<line x1="449.0" y1="84.5" x2="452.0" y2="84.5" stroke="#555" stroke-width="1.5"/>
<line x1="449.0" y1="96.5" x2="452.0" y2="96.5" stroke="#555" stroke-width="1.5"/>
<line x1="449.0" y1="108.5" x2="452.0" y2="108.5" stroke="#555" stroke-width="1.5"/>
<line x1="447.5" y1="120.5" x2="453.5" y2="120.5" stroke="#555" stroke-width="1.5"/>
<line x1="449.0" y1="132.5" x2="452.0" y2="132.5" stroke="#555" stroke-width="1.5"/>
<line x1="449.0" y1="144.5" x2="452.0" y2="144.5" stroke="#555" stroke-width="1.5"/>
<line x1="449.0" y1="156.5" x2="452.0" y2="156.5" stroke="#555" stroke-width="1.5"/>
<line x1="449.0" y1="168.5" x2="452.0" y2="168.5" stroke="#555" stroke-width="1.5"/>
<line x1="447.5" y1="180.5" x2="453.5" y2="180.5" stroke="#555" stroke-width="1.5"/>
<line x1="449.0" y1="192.5" x2="452.0" y2="192.5" stroke="#555" stroke-width="1.5"/>
<line x1="449.0" y1="204.5" x2="452.0" y2="204.5" stroke="#555" stroke-width="1.5"/>
<line x1="449.0" y1="216.5" x2="452.0" y2="216.5" stroke="#555" stroke-width="1.5"/>
<line x1="449.0" y1="228.5" x2="452.0" y2="228.5" stroke="#555" stroke-width="1.5"/>
<line x1="447.5" y1="240.5" x2="453.5" y2="240.5" stroke="#555" stroke-width="1.5"/>
<line x1="449.0" y1="252.5" x2="452.0" y2="252.5" stroke="#555" stroke-width="1.5"/>
<line x1="449.0" y1="264.5" x2="452.0" y2="264.5" stroke="#555" stroke-width="1.5"/>
<line x1="449.0" y1="276.5" x2="452.0" y2="276.5" stroke="#555" stroke-width="1.5"/>
<line x1="449.0" y1="288.5" x2="452.0" y2="288.5" stroke="#555" stroke-width="1.5"/>
<line x1="447.5" y1="300.5" x2="453.5" y2="300.5" stroke="#555" stroke-width="1.5"/>
<line x1="449.0" y1="312.5" x2="452.0" y2="312.5" stroke="#555" stroke-width="1.5"/>
<line x1="449.0" y1="324.5" x2="452.0" y2="324.5" stroke="#555" stroke-width="1.5"/>
<line x1="449.0" y1="336.5" x2="452.0" y2="336.5" stroke="#555" stroke-width="1.5"/>
<line x1="449.0" y1="348.5" x2="452.0" y2="348.5" stroke="#555" stroke-width="1.5"/>
<line x1="447.5" y1="360.5" x2="453.5" y2="360.5" stroke="#555" stroke-width="1.5"/>
<line x1="449.0" y1="372.5" x2="452.0" y2="372.5" stroke="#555" stroke-width="1.5"/>
<line x1="449.0" y1="384.5" x2="452.0" y2="384.5" stroke="#555" stroke-width="1.5"/>
<line x1="449.0" y1="396.5" x2="452.0" y2="396.5" stroke="#555" stroke-width="1.5"/>
<line x1="449.0" y1="408.5" x2="452.0" y2="408.5" stroke="#555" stroke-width="1.5"/>
<line x1="447.5" y1="420.5" x2="453.5" y2="420.5" stroke="#555" stroke-width="1.5"/>
<line x1="449.0" y1="432.5" x2="452.0" y2="432.5" stroke="#555" stroke-width="1.5"/>
<line x1="449.0" y1="444.5" x2="452.0" y2="444.5" stroke="#555" stroke-width="1.5"/>
<line x1="449.0" y1="456.5" x2="452.0" y2="456.5" stroke="#555" stroke-width="1.5"/>
<line x1="449.0" y1="468.5" x2="452.0" y2="468.5" stroke="#555" stroke-width="1.5"/>
<polyline points="0.0,156.31 0.5,155.73 1.0,155.16 1.5,154.60 2.0,154.06 2.5,153.53 3.0,153.02 3.5,152.52 4.0,152.03 4.5,151.56 5.0,151.10 5.5,150.65 6.0,150.22 6.5,149.81 7.0,149.41 7.5,149.02 8.0,148.65 8.5,148.29 9.0,147.95 9.5,147.63 10.0,147.31 10.5,147.02 11.0,146.73 11.5,146.47 12.0,146.21 12.5,145.98 13.0,145.76 13.5,145.55 14.0,145.36 14.5,145.18 15.0,145.02 15.5,144.87 16.0,144.74 16.5,144.63 17.0,144.53 17.5,144.44 18.0,144.37 18.5,144.32 19.0,144.28 19.5,144.26 20.0,144.25 20.5,144.26 21.0,144.28 21.5,144.32 22.0,144.37 22.5,144.44 23.0,144.53 23.5,144.63 24.0,144.74 24.5,144.87 25.0,145.02 25.5,145.18 26.0,145.36 26.5,145.55 27.0,145.76 27.5,145.98 28.0,146.21 28.5,146.47 29.0,146.73 29.5,147.02 30.0,147.31 30.5,147.63 31.0,147.95 31.5,148.29 32.0,148.65 32.5,149.02 33.0,149.41 33.5,149.81 34.0,150.22 34.5,150.65 35.0,151.10 35.5,151.56 36.0,152.03 36.5,152.52 37.0,153.02 37.5,153.53 38.0,154.06 38.5,154.60 39.0,155.16 39.5,155.73 40.0,156.31 40.5,156.91 41.0,157.52 41.5,158.14 42.0,158.78 42.5,159.43 43.0,160.09 43.5,160.77 44.0,161.46 44.5,162.16 45.0,162.88 45.5,163.60 46.0,164.34 46.5,165.09 47.0,165.86 47.5,166.63 48.0,167.42 48.5,168.22 49.0,169.03 49.5,169.85 50.0,170.68 50.5,171.53 51.0,172.38 51.5,173.25 52.0,174.13 52.5,175.02 53.0,175.91 53.5,176.82 54.0,177.74 54.5,178.67 55.0,179.61 55.5,180.56 56.0,181.52 56.5,182.49 57.0,183.47 57.5,184.45 58.0,185.45 58.5,186.46 59.0,187.47 59.5,188.49 60.0,189.52 60.5,190.56 61.0,191.61 61.5,192.67 62.0,193.73 62.5,194.80 63.0,195.88 63.5,196.96 64.0,198.05 64.5,199.15 65.0,200.26 65.5,201.37 66.0,202.49 66.5,203.62 67.0,204.75 67.5,205.89 68.0,207.03 68.5,208.18 69.0,209.33 69.5,210.49 70.0,211.65 70.5,212.82 71.0,214.00 71.5,215.17 72.0,216.35 72.5,217.54 73.0,218.73 73.5,219.92 74.0,221.12 74.5,222.32 75.0,223.52 75.5,224.73 76.0,225.94 76.5,227.15 77.0,228.36 77.5,229.58 78.0,230.80 78.5,232.02 79.0,233.24 79.5,234.46 80.0,235.69 80.5,236.91 81.0,238.14 81.5,239.36 82.0,240.59 82.5,241.82 83.0,243.04 83.5,244.27 84.0,245.50 84.5,246.72 85.0,247.95 85.5,249.17 86.0,250.39 86.5,251.62 87.0,252.84 87.5,254.05 88.0,255.27 88.5,256.49 89.0,257.70 89.5,258.91 90.0,260.11 90.5,261.32 91.0,262.52 91.5,263.72 92.0,264.91 92.5,266.10 93.0,267.29 93.5,268.47 94.0,269.65 94.5,270.83 95.0,272.00 95.5,273.16 96.0,274.32 96.5,275.48 97.0,276.63 97.5,277.77 98.0,278.91 98.5,280.04 99.0,281.17 99.5,282.29 100.0,283.41 100.5,284.51 101.0,285.62 101.5,286.71 102.0,287.80 102.5,288.88 103.0,289.95 103.5,291.02 104.0,292.07 104.5,293.12 105.0,294.17 105.5,295.20 106.0,296.22 106.5,297.24 107.0,298.25 107.5,299.25 108.0,300.24 108.5,301.22 109.0,302.19 109.5,303.15 110.0,304.10 110.5,305.05 111.0,305.98 111.5,306.90 112.0,307.81 112.5,308.72 113.0,309.61 113.5,310.49 114.0,311.36 114.5,312.22 115.0,313.06 115.5,313.90 116.0,314.73 116.5,315.54 117.0,316.34 117.5,317.13 118.0,317.91 118.5,318.68 119.0,319.43 119.5,320.18 120.0,320.91 120.5,321.63 121.0,322.33 121.5,323.02 122.0,323.70 122.5,324.37 123.0,325.03 123.5,325.67 124.0,326.29 124.5,326.91 125.0,327.51 125.5,328.10 126.0,328.67 126.5,329.23 127.0,329.78 127.5,330.31 128.0,330.83 128.5,331.34 129.0,331.83 129.5,332.30 130.0,332.77 130.5,333.21 131.0,333.65 131.5,334.07 132.0,334.47 132.5,334.86 133.0,335.24 133.5,335.60 134.0,335.95 134.5,336.28 135.0,336.59 135.5,336.90 136.0,337.18 136.5,337.45 137.0,337.71 137.5,337.95 138.0,338.18 138.5,338.39 139.0,338.59 139.5,338.77 140.0,338.93 140.5,339.08 141.0,339.22 141.5,339.34 142.0,339.44 142.5,339.53 143.0,339.61 143.5,339.67 144.0,339.71 144.5,339.74 145.0,339.75 145.5,339.75 146.0,339.73 146.5,339.69 147.0,339.64 147.5,339.58 148.0,339.50 148.5,339.40 149.0,339.29 149.5,339.17 150.0,339.03 150.5,338.87 151.0,338.70 151.5,338.51 152.0,338.31 152.5,338.09 153.0,337.86 153.5,337.61 154.0,337.35 154.5,337.07 155.0,336.78 155.5,336.47 156.0,336.15 156.5,335.81 157.0,335.46 157.5,335.09 158.0,334.71 158.5,334.31 159.0,333.90 159.5,333.48 160.0,333.04 160.5,332.58 161.0,332.11 161.5,331.63 162.0,331.14 162.5,330.62 163.0,330.10 163.5,329.56 164.0,329.01 164.5,328.44 165.0,327.86 165.5,327.27 166.0,326.66 166.5,326.04 167.0,325.41 167.5,324.76 168.0,324.11 168.5,323.43 169.0,322.75 169.5,322.05 170.0,321.34 170.5,320.62 171.0,319.88 171.5,319.13 172.0,318.37 172.5,317.60 173.0,316.82 173.5,316.02 174.0,315.22 174.5,314.40 175.0,313.57 175.5,312.73 176.0,311.87 176.5,311.01 177.0,310.14 177.5,309.25 178.0,308.36 178.5,307.45 179.0,306.53 179.5,305.61 180.0,304.67 180.5,303.72 181.0,302.77 181.5,301.80 182.0,300.83 182.5,299.84 183.0,298.85 183.5,297.85 184.0,296.84 184.5,295.82 185.0,294.79 185.5,293.75 186.0,292.70 186.5,291.65 187.0,290.59 187.5,289.52 188.0,288.45 188.5,287.36 189.0,286.27 189.5,285.18 190.0,284.07 190.5,282.96 191.0,281.84 191.5,280.72 192.0,279.59 192.5,278.46 193.0,277.31 193.5,276.17 194.0,275.02 194.5,273.86 195.0,272.70 195.5,271.53 196.0,270.36 196.5,269.18 197.0,268.00 197.5,266.82 198.0,265.63 198.5,264.43 199.0,263.24 199.5,262.04 200.0,260.84 200.5,259.63 201.0,258.42 201.5,257.21 202.0,256.00 202.5,254.78 203.0,253.57 203.5,252.35 204.0,251.13 204.5,249.90 205.0,248.68 205.5,247.46 206.0,246.23 206.5,245.01 207.0,243.78 207.5,242.55 208.0,241.33 208.5,240.10 209.0,238.87 209.5,237.65 210.0,236.42 210.5,235.20 211.0,233.97 211.5,232.75 212.0,231.53 212.5,230.31 213.0,229.09 213.5,227.88 214.0,226.67 214.5,225.46 215.0,224.25 215.5,223.04 216.0,221.84 216.5,220.64 217.0,219.45 217.5,218.25 218.0,217.07 218.5,215.88 219.0,214.70 219.5,213.53 220.0,212.35 220.5,211.19 221.0,210.03 221.5,208.87 222.0,207.72 222.5,206.57 223.0,205.43 223.5,204.30 224.0,203.17 224.5,202.04 225.0,200.93 225.5,199.82 226.0,198.71 226.5,197.62 227.0,196.53 227.5,195.44 228.0,194.37 228.5,193.30 229.0,192.24 229.5,191.19 230.0,190.15 230.5,189.11 231.0,188.08 231.5,187.06 232.0,186.05 232.5,185.05 233.0,184.06 233.5,183.08 234.0,182.10 234.5,181.14 235.0,180.18 235.5,179.24 236.0,178.30 236.5,177.37 237.0,176.46 237.5,175.55 238.0,174.66 238.5,173.78 239.0,172.90 239.5,172.04 240.0,171.19 240.5,170.35 241.0,169.52 241.5,168.70 242.0,167.90 242.5,167.10 243.0,166.32 243.5,165.55 244.0,164.79 244.5,164.04 245.0,163.31 245.5,162.59 246.0,161.88 246.5,161.18 247.0,160.50 247.5,159.83 248.0,159.17 248.5,158.52 249.0,157.89 249.5,157.27 250.0,156.67 250.5,156.08 251.0,155.50 251.5,154.93 252.0,154.38 252.5,153.85 253.0,153.32 253.5,152.81 254.0,152.32 254.5,151.84 255.0,151.37 255.5,150.92 256.0,150.48 256.5,150.06 257.0,149.65 257.5,149.25 258.0,148.87 258.5,148.51 259.0,148.16 259.5,147.82 260.0,147.50 260.5,147.19 261.0,146.90 261.5,146.63 262.0,146.36 262.5,146.12 263.0,145.89 263.5,145.67 264.0,145.47 264.5,145.28 265.0,145.11 265.5,144.96 266.0,144.82 266.5,144.69 267.0,144.59 267.5,144.49 268.0,144.41 268.5,144.35 269.0,144.30 269.5,144.27 270.0,144.25 270.5,144.25 271.0,144.27 271.5,144.29 272.0,144.34 272.5,144.40 273.0,144.47 273.5,144.57 274.0,144.67 274.5,144.79 275.0,144.93 275.5,145.08 276.0,145.25 276.5,145.43 277.0,145.63 277.5,145.84 278.0,146.07 278.5,146.31 279.0,146.57 279.5,146.85 280.0,147.13 280.5,147.44 281.0,147.75 281.5,148.09 282.0,148.44 282.5,148.80 283.0,149.18 283.5,149.57 284.0,149.97 284.5,150.39 285.0,150.83 285.5,151.28 286.0,151.74 286.5,152.22 287.0,152.71 287.5,153.22 288.0,153.74 288.5,154.28 289.0,154.82 289.5,155.39 290.0,155.96 290.5,156.55 291.0,157.15 291.5,157.77 292.0,158.40 292.5,159.04 293.0,159.70 293.5,160.36 294.0,161.04 294.5,161.74 295.0,162.45 295.5,163.16 296.0,163.90 296.5,164.64 297.0,165.40 297.5,166.16 298.0,166.94 298.5,167.74 299.0,168.54 299.5,169.35 300.0,170.18 300.5,171.02 301.0,171.87 301.5,172.73 302.0,173.60 302.5,174.48 303.0,175.37 303.5,176.28 304.0,177.19 304.5,178.11 305.0,179.05 305.5,179.99 306.0,180.94 306.5,181.91 307.0,182.88 307.5,183.86 308.0,184.85 308.5,185.85 309.0,186.86 309.5,187.88 310.0,188.90 310.5,189.94 311.0,190.98 311.5,192.03 312.0,193.09 312.5,194.16 313.0,195.23 313.5,196.31 314.0,197.40 314.5,198.49 315.0,199.60 315.5,200.70 316.0,201.82 316.5,202.94 317.0,204.07 317.5,205.20 318.0,206.34 318.5,207.49 319.0,208.64 319.5,209.79 320.0,210.95 320.5,212.12 321.0,213.29 321.5,214.47 322.0,215.65 322.5,216.83 323.0,218.02 323.5,219.21 324.0,220.40 324.5,221.60 325.0,222.80 325.5,224.01 326.0,225.21 326.5,226.42 327.0,227.64 327.5,228.85 328.0,230.07 328.5,231.29 329.0,232.51 329.5,233.73 330.0,234.95 330.5,236.18 331.0,237.40 331.5,238.63 332.0,239.85 332.5,241.08 333.0,242.31 333.5,243.53 334.0,244.76 334.5,245.99 335.0,247.21 335.5,248.44 336.0,249.66 336.5,250.88 337.0,252.10 337.5,253.32 338.0,254.54 338.5,255.76 339.0,256.97 339.5,258.18 340.0,259.39 340.5,260.60 341.0,261.80 341.5,263.00 342.0,264.20 342.5,265.39 343.0,266.58 343.5,267.76 344.0,268.94 344.5,270.12 345.0,271.29 345.5,272.46 346.0,273.63 346.5,274.78 347.0,275.94 347.5,277.09 348.0,278.23 348.5,279.36 349.0,280.50 349.5,281.62 350.0,282.74 350.5,283.85 351.0,284.96 351.5,286.05 352.0,287.15 352.5,288.23 353.0,289.31 353.5,290.38 354.0,291.44 354.5,292.50 355.0,293.54 355.5,294.58 356.0,295.61 356.5,296.63 357.0,297.64 357.5,298.65 358.0,299.64 358.5,300.63 359.0,301.61 359.5,302.58 360.0,303.53 360.5,304.48 361.0,305.42 361.5,306.35 362.0,307.27 362.5,308.18 363.0,309.07 363.5,309.96 364.0,310.84 364.5,311.70 365.0,312.56 365.5,313.40 366.0,314.23 366.5,315.05 367.0,315.86 367.5,316.66 368.0,317.45 368.5,318.22 369.0,318.98 369.5,319.73 370.0,320.47 370.5,321.20 371.0,321.91 371.5,322.61 372.0,323.30 372.5,323.97 373.0,324.63 373.5,325.28 374.0,325.92 374.5,326.54 375.0,327.15 375.5,327.75 376.0,328.33 376.5,328.90 377.0,329.45 377.5,329.99 378.0,330.52 378.5,331.03 379.0,331.53 379.5,332.02 380.0,332.49 380.5,332.95 381.0,333.39 381.5,333.82 382.0,334.23 382.5,334.63 383.0,335.01 383.5,335.38 384.0,335.74 384.5,336.08 385.0,336.41 385.5,336.72 386.0,337.01 386.5,337.29 387.0,337.56 387.5,337.81 388.0,338.05 388.5,338.27 389.0,338.47 389.5,338.66 390.0,338.84 390.5,339.00 391.0,339.14 391.5,339.27 392.0,339.38 392.5,339.48 393.0,339.57 393.5,339.63 394.0,339.69 394.5,339.72 395.0,339.74 395.5,339.75 396.0,339.74 396.5,339.72 397.0,339.68 397.5,339.62 398.0,339.55 398.5,339.46 399.0,339.36 399.5,339.25 400.0,339.11 400.5,338.97 401.0,338.80 401.5,338.62 402.0,338.43 402.5,338.22 403.0,338.00 403.5,337.76 404.0,337.51 404.5,337.24 405.0,336.95 405.5,336.66 406.0,336.34 406.5,336.01 407.0,335.67 407.5,335.31 408.0,334.94 408.5,334.55 409.0,334.15 409.5,333.73 410.0,333.30 410.5,332.86 411.0,332.40 411.5,331.92 412.0,331.43 412.5,330.93 413.0,330.42 413.5,329.89 414.0,329.34 414.5,328.78 415.0,328.21 415.5,327.63 416.0,327.03 416.5,326.42 417.0,325.79 417.5,325.15 418.0,324.50 418.5,323.84 419.0,323.16 419.5,322.47 420.0,321.77 420.5,321.05 421.0,320.32 421.5,319.58 422.0,318.83 422.5,318.07 423.0,317.29 423.5,316.50 424.0,315.70 424.5,314.89 425.0,314.07 425.5,313.23 426.0,312.39 426.5,311.53 427.0,310.66 427.5,309.78 428.0,308.89 428.5,307.99 429.0,307.08 429.5,306.16 430.0,305.23 430.5,304.29 431.0,303.34 431.5,302.38 432.0,301.41 432.5,300.43 433.0,299.45 433.5,298.45 434.0,297.44 434.5,296.43 435.0,295.40 435.5,294.37 436.0,293.33 436.5,292.28 437.0,291.23 437.5,290.16 438.0,289.09 438.5,288.01 439.0,286.93 439.5,285.84 440.0,284.74 440.5,283.63 441.0,282.52 441.5,281.40 442.0,280.27 442.5,279.14 443.0,278.00 443.5,276.86 444.0,275.71 444.5,274.55 445.0,273.39 445.5,272.23 446.0,271.06 446.5,269.89 447.0,268.71 447.5,267.53 448.0,266.34 448.5,265.15 449.0,263.96 449.5,262.76 450.0,261.56 450.5,260.36 451.0,259.15 451.5,257.94 452.0,256.73 452.5,255.51 453.0,254.30 453.5,253.08 454.0,251.86 454.5,250.64 455.0,249.42 455.5,248.19 456.0,246.97 456.5,245.74 457.0,244.51 457.5,243.29 458.0,242.06 458.5,240.83 459.0,239.61 459.5,238.38 460.0,237.16 460.5,235.93 461.0,234.71 461.5,233.48 462.0,232.26 462.5,231.04 463.0,229.82 463.5,228.61 464.0,227.39 464.5,226.18 465.0,224.97 465.5,223.77 466.0,222.56 466.5,221.36 467.0,220.16 467.5,218.97 468.0,217.78 468.5,216.59 469.0,215.41 469.5,214.23 470.0,213.06 470.5,211.89 471.0,210.72 471.5,209.56 472.0,208.41 472.5,207.26 473.0,206.11 473.5,204.98 474.0,203.84 474.5,202.72 475.0,201.60 475.5,200.48 476.0,199.37 476.5,198.27 477.0,197.18 477.5,196.09 478.0,195.01 478.5,193.94 479.0,192.88 479.5,191.82 480.0,190.77 480.5,189.73 481.0,188.70 481.5,187.67 482.0,186.66 482.5,185.65 483.0,184.65 483.5,183.66 484.0,182.68 484.5,181.71 485.0,180.75 485.5,179.80 486.0,178.86 486.5,177.93 487.0,177.01 487.5,176.10 488.0,175.19 488.5,174.30 489.0,173.42 489.5,172.56 490.0,171.70 490.5,170.85 491.0,170.02 491.5,169.19 492.0,168.38 492.5,167.58 493.0,166.79 493.5,166.01 494.0,165.24 494.5,164.49 495.0,163.75 495.5,163.02 496.0,162.30 496.5,161.60 497.0,160.91 497.5,160.23 498.0,159.56 498.5,158.91 499.0,158.27 499.5,157.64 500.0,157.03 500.5,156.43 501.0,155.84 501.5,155.27 502.0,154.71 502.5,154.17 503.0,153.64 503.5,153.12 504.0,152.61 504.5,152.13 505.0,151.65 505.5,151.19 506.0,150.74 506.5,150.31 507.0,149.89 507.5,149.49 508.0,149.10 508.5,148.72 509.0,148.37 509.5,148.02 510.0,147.69 510.5,147.37 511.0,147.07 511.5,146.79 512.0,146.52 512.5,146.26 513.0,146.02 513.5,145.80 514.0,145.59 514.5,145.39 515.0,145.21 515.5,145.05 516.0,144.90 516.5,144.77 517.0,144.65 517.5,144.55 518.0,144.46 518.5,144.39 519.0,144.33 519.5,144.29 520.0,144.26 520.5,144.25 521.0,144.25 521.5,144.27 522.0,144.31 522.5,144.36 523.0,144.43 523.5,144.51 524.0,144.61 524.5,144.72 525.0,144.85 525.5,144.99 526.0,145.15 526.5,145.32 527.0,145.51 527.5,145.71 528.0,145.93 528.5,146.17 529.0,146.42 529.5,146.68 530.0,146.96 530.5,147.25 531.0,147.56 531.5,147.89 532.0,148.23 532.5,148.58 533.0,148.95 533.5,149.33 534.0,149.73 534.5,150.14 535.0,150.57 535.5,151.01 536.0,151.46 536.5,151.93 537.0,152.42 537.5,152.92 538.0,153.43 538.5,153.95 539.0,154.49 539.5,155.05 540.0,155.61 540.5,156.19 541.0,156.79 541.5,157.40 542.0,158.02 542.5,158.65 543.0,159.30 543.5,159.96 544.0,160.63 544.5,161.32 545.0,162.02 545.5,162.73 546.0,163.46 546.5,164.19 547.0,164.94 547.5,165.70 548.0,166.47 548.5,167.26 549.0,168.06 549.5,168.86 550.0,169.68 550.5,170.52 551.0,171.36 551.5,172.21 552.0,173.08 552.5,173.95 553.0,174.84 553.5,175.73 554.0,176.64 554.5,177.56 555.0,178.49 555.5,179.42 556.0,180.37 556.5,181.33 557.0,182.30 557.5,183.27 558.0,184.26 558.5,185.25 559.0,186.25 559.5,187.27 560.0,188.29 560.5,189.32 561.0,190.35 561.5,191.40 562.0,192.45 562.5,193.52 563.0,194.58 563.5,195.66 564.0,196.74 564.5,197.84 565.0,198.93 565.5,200.04 566.0,201.15 566.5,202.27 567.0,203.39 567.5,204.52 568.0,205.66 568.5,206.80 569.0,207.95 569.5,209.10 570.0,210.26 570.5,211.42 571.0,212.59 571.5,213.76 572.0,214.94 572.5,216.12 573.0,217.30 573.5,218.49 574.0,219.69 574.5,220.88 575.0,222.08 575.5,223.28 576.0,224.49 576.5,225.70 577.0,226.91 577.5,228.12 578.0,229.34 578.5,230.55 579.0,231.77 579.5,233.00 580.0,234.22 580.5,235.44 581.0,236.67 581.5,237.89 582.0,239.12 582.5,240.34 583.0,241.57 583.5,242.80 584.0,244.02 584.5,245.25 585.0,246.48 585.5,247.70 586.0,248.93 586.5,250.15 587.0,251.37 587.5,252.59 588.0,253.81 588.5,255.03 589.0,256.24 589.5,257.46 590.0,258.67 590.5,259.87 591.0,261.08 591.5,262.28 592.0,263.48 592.5,264.67 593.0,265.86 593.5,267.05 594.0,268.24 594.5,269.42 595.0,270.59 595.5,271.76 596.0,272.93 596.5,274.09 597.0,275.25 597.5,276.40 598.0,277.54 598.5,278.68 599.0,279.82 599.5,280.95 600.0,282.07 600.5,283.18 601.0,284.29 601.5,285.40 602.0,286.49 602.5,287.58 603.0,288.66 603.5,289.74 604.0,290.80 604.5,291.86 605.0,292.91 605.5,293.96 606.0,294.99 606.5,296.02 607.0,297.04 607.5,298.05 608.0,299.05 608.5,300.04 609.0,301.02 609.5,302.00 610.0,302.96 610.5,303.91 611.0,304.86 611.5,305.79 612.0,306.72 612.5,307.63 613.0,308.54 613.5,309.43 614.0,310.31 614.5,311.18 615.0,312.05 615.5,312.90 616.0,313.74 616.5,314.56 617.0,315.38 617.5,316.18 618.0,316.98 618.5,317.76 619.0,318.53 619.5,319.29 620.0,320.03 620.5,320.76 621.0,321.48 621.5,322.19 622.0,322.89 622.5,323.57 623.0,324.24 623.5,324.90 624.0,325.54 624.5,326.17 625.0,326.79 625.5,327.39 626.0,327.98 626.5,328.56 627.0,329.12 627.5,329.67 628.0,330.21 628.5,330.73 629.0,331.24 629.5,331.73 630.0,332.21 630.5,332.67 631.0,333.13 631.5,333.56 632.0,333.98 632.5,334.39 633.0,334.79 633.5,335.16 634.0,335.53 634.5,335.88 635.0,336.21 635.5,336.53 636.0,336.84 636.5,337.13 637.0,337.40 637.5,337.66 638.0,337.91 638.5,338.14 639.0,338.35 639.5,338.55 640.0,338.73 640.5,338.90 641.0,339.06 641.5,339.19 642.0,339.32 642.5,339.42 643.0,339.52 643.5,339.59 644.0,339.66 644.5,339.70 645.0,339.73 645.5,339.75 646.0,339.75 646.5,339.73 647.0,339.70 647.5,339.66 648.0,339.59 648.5,339.52 649.0,339.42 649.5,339.32 650.0,339.19 650.5,339.06 651.0,338.90 651.5,338.73 652.0,338.55 652.5,338.35 653.0,338.14 653.5,337.91 654.0,337.66 654.5,337.40 655.0,337.13 655.5,336.84 656.0,336.53 656.5,336.21 657.0,335.88 657.5,335.53 658.0,335.16 658.5,334.79 659.0,334.39 659.5,333.98 660.0,333.56 660.5,333.13 661.0,332.67 661.5,332.21 662.0,331.73 662.5,331.24 663.0,330.73 663.5,330.21 664.0,329.67 664.5,329.12 665.0,328.56 665.5,327.98 666.0,327.39 666.5,326.79 667.0,326.17 667.5,325.54 668.0,324.90 668.5,324.24 669.0,323.57 669.5,322.89 670.0,322.19 670.5,321.48 671.0,320.76 671.5,320.03 672.0,319.29 672.5,318.53 673.0,317.76 673.5,316.98 674.0,316.18 674.5,315.38 675.0,314.56 675.5,313.74 676.0,312.90 676.5,312.05 677.0,311.18 677.5,310.31 678.0,309.43 678.5,308.54 679.0,307.63 679.5,306.72 680.0,305.79 680.5,304.86 681.0,303.91 681.5,302.96 682.0,302.00 682.5,301.02 683.0,300.04 683.5,299.05 684.0,298.05 684.5,297.04 685.0,296.02 685.5,294.99 686.0,293.96 686.5,292.91 687.0,291.86 687.5,290.80 688.0,289.74 688.5,288.66 689.0,287.58 689.5,286.49 690.0,285.40 690.5,284.29 691.0,283.18 691.5,282.07 692.0,280.95 692.5,279.82 693.0,278.68 693.5,277.54 694.0,276.40 694.5,275.25 695.0,274.09 695.5,272.93 696.0,271.76 696.5,270.59 697.0,269.42 697.5,268.24 698.0,267.05 698.5,265.86 699.0,264.67 699.5,263.48 700.0,262.28 700.5,261.08 701.0,259.87 701.5,258.67 702.0,257.46 702.5,256.24 703.0,255.03 703.5,253.81 704.0,252.59 704.5,251.37 705.0,250.15 705.5,248.93 706.0,247.70 706.5,246.48 707.0,245.25 707.5,244.02 708.0,242.80 708.5,241.57 709.0,240.34 709.5,239.12 710.0,237.89 710.5,236.67 711.0,235.44 711.5,234.22 712.0,233.00 712.5,231.77 713.0,230.55 713.5,229.34 714.0,228.12 714.5,226.91 715.0,225.70 715.5,224.49 716.0,223.28 716.5,222.08 717.0,220.88 717.5,219.69 718.0,218.49 718.5,217.30 719.0,216.12 719.5,214.94 720.0,213.76 720.5,212.59 721.0,211.42 721.5,210.26 722.0,209.10 722.5,207.95 723.0,206.80 723.5,205.66 724.0,204.52 724.5,203.39 725.0,202.27 725.5,201.15 726.0,200.04 726.5,198.93 727.0,197.84 727.5,196.74 728.0,195.66 728.5,194.58 729.0,193.52 729.5,192.45 730.0,191.40 730.5,190.35 731.0,189.32 731.5,188.29 732.0,187.27 732.5,186.25 733.0,185.25 733.5,184.26 734.0,183.27 734.5,182.30 735.0,181.33 735.5,180.37 736.0,179.42 736.5,178.49 737.0,177.56 737.5,176.64 738.0,175.73 738.5,174.84 739.0,173.95 739.5,173.08 740.0,172.21 740.5,171.36 741.0,170.52 741.5,169.68 742.0,168.86 742.5,168.06 743.0,167.26 743.5,166.47 744.0,165.70 744.5,164.94 745.0,164.19 745.5,163.46 746.0,162.73 746.5,162.02 747.0,161.32 747.5,160.63 748.0,159.96 748.5,159.30 749.0,158.65 749.5,158.02 750.0,157.40 750.5,156.79 751.0,156.19 751.5,155.61 752.0,155.05 752.5,154.49 753.0,153.95 753.5,153.43 754.0,152.92 754.5,152.42 755.0,151.93 755.5,151.46 756.0,151.01 756.5,150.57 757.0,150.14 757.5,149.73 758.0,149.33 758.5,148.95 759.0,148.58 759.5,148.23 760.0,147.89 760.5,147.56 761.0,147.25 761.5,146.96 762.0,146.68 762.5,146.42 763.0,146.17 763.5,145.93 764.0,145.71 764.5,145.51 765.0,145.32 765.5,145.15 766.0,144.99 766.5,144.85 767.0,144.72 767.5,144.61 768.0,144.51 768.5,144.43 769.0,144.36 769.5,144.31 770.0,144.27 770.5,144.25 771.0,144.25 771.5,144.26 772.0,144.29 772.5,144.33 773.0,144.39 773.5,144.46 774.0,144.55 774.5,144.65 775.0,144.77 775.5,144.90 776.0,145.05 776.5,145.21 777.0,145.39 777.5,145.59 778.0,145.80 778.5,146.02 779.0,146.26 779.5,146.52 780.0,146.79 780.5,147.07 781.0,147.37 781.5,147.69 782.0,148.02 782.5,148.37 783.0,148.72 783.5,149.10 784.0,149.49 784.5,149.89 785.0,150.31 785.5,150.74 786.0,151.19 786.5,151.65 787.0,152.13 787.5,152.61 788.0,153.12 788.5,153.64 789.0,154.17 789.5,154.71 790.0,155.27 790.5,155.84 791.0,156.43 791.5,157.03 792.0,157.64 792.5,158.27 793.0,158.91 793.5,159.56 794.0,160.23 794.5,160.91 795.0,161.60 795.5,162.30 796.0,163.02 796.5,163.75 797.0,164.49 797.5,165.24 798.0,166.01 798.5,166.79 799.0,167.58 799.5,168.38 800.0,169.19 800.5,170.02 801.0,170.85 801.5,171.70 802.0,172.56 802.5,173.42 803.0,174.30 803.5,175.19 804.0,176.10 804.5,177.01 805.0,177.93 805.5,178.86 806.0,179.80 806.5,180.75 807.0,181.71 807.5,182.68 808.0,183.66 808.5,184.65 809.0,185.65 809.5,186.66 810.0,187.67 810.5,188.70 811.0,189.73 811.5,190.77 812.0,191.82 812.5,192.88 813.0,193.94 813.5,195.01 814.0,196.09 814.5,197.18 815.0,198.27 815.5,199.37 816.0,200.48 816.5,201.60 817.0,202.72 817.5,203.84 818.0,204.98 818.5,206.11 819.0,207.26 819.5,208.41 820.0,209.56 820.5,210.72 821.0,211.89 821.5,213.06 822.0,214.23 822.5,215.41 823.0,216.59 823.5,217.78 824.0,218.97 824.5,220.16 825.0,221.36 825.5,222.56 826.0,223.77 826.5,224.97 827.0,226.18 827.5,227.39 828.0,228.61 828.5,229.82 829.0,231.04 829.5,232.26 830.0,233.48 830.5,234.71 831.0,235.93 831.5,237.16 832.0,238.38 832.5,239.61 833.0,240.83 833.5,242.06 834.0,243.29 834.5,244.51 835.0,245.74 835.5,246.97 836.0,248.19 836.5,249.42 837.0,250.64 837.5,251.86 838.0,253.08 838.5,254.30 839.0,255.51 839.5,256.73 840.0,257.94 840.5,259.15 841.0,260.36 841.5,261.56 842.0,262.76 842.5,263.96 843.0,265.15 843.5,266.34 844.0,267.53 844.5,268.71 845.0,269.89 845.5,271.06 846.0,272.23 846.5,273.39 847.0,274.55 847.5,275.71 848.0,276.86 848.5,278.00 849.0,279.14 849.5,280.27 850.0,281.40 850.5,282.52 851.0,283.63 851.5,284.74 852.0,285.84 852.5,286.93 853.0,288.01 853.5,289.09 854.0,290.16 854.5,291.23 855.0,292.28 855.5,293.33 856.0,294.37 856.5,295.40 857.0,296.43 857.5,297.44 858.0,298.45 858.5,299.45 859.0,300.43 859.5,301.41 860.0,302.38 860.5,303.34 861.0,304.29 861.5,305.23 862.0,306.16 862.5,307.08 863.0,307.99 863.5,308.89 864.0,309.78 864.5,310.66 865.0,311.53 865.5,312.39 866.0,313.23 866.5,314.07 867.0,314.89 867.5,315.70 868.0,316.50 868.5,317.29 869.0,318.07 869.5,318.83 870.0,319.58 870.5,320.32 871.0,321.05 871.5,321.77 872.0,322.47 872.5,323.16 873.0,323.84 873.5,324.50 874.0,325.15 874.5,325.79 875.0,326.42 875.5,327.03 876.0,327.63 876.5,328.21 877.0,328.78 877.5,329.34 878.0,329.89 878.5,330.42 879.0,330.93 879.5,331.43 880.0,331.92 880.5,332.40 881.0,332.86 881.5,333.30 882.0,333.73 882.5,334.15 883.0,334.55 883.5,334.94 884.0,335.31 884.5,335.67 885.0,336.01 885.5,336.34 886.0,336.66 886.5,336.95 887.0,337.24 887.5,337.51 888.0,337.76 888.5,338.00 889.0,338.22 889.5,338.43 890.0,338.62 890.5,338.80 891.0,338.97 891.5,339.11 892.0,339.25 892.5,339.36 893.0,339.46 893.5,339.55 894.0,339.62 894.5,339.68 895.0,339.72 895.5,339.74 896.0,339.75 896.5,339.74 897.0,339.72 897.5,339.69 898.0,339.63 898.5,339.57 899.0,339.48 899.5,339.38 900.0,339.27" fill="none" stroke="#d4cc74" stroke-width="1.5"/>
<line x1="0" y1="180.5" x2="900" y2="180.5" stroke="#dedcbc" stroke-width="2" stroke-dasharray="6.6 1.7 2 1.7" stroke-dashoffset="-0.7"/>
<line x1="0" y1="299.5" x2="900" y2="299.5" stroke="#dedcbc" stroke-width="2" stroke-dasharray="8.7 7.3"/>
<line x1="251" y1="0" x2="251" y2="478" stroke="#dedcbc" stroke-width="2" stroke-dasharray="6.6 1.7 2 1.7" stroke-dashoffset="-0.7"/>
<line x1="394" y1="0" x2="394" y2="478" stroke="#dedcbc" stroke-width="2" stroke-dasharray="8.7 7.3"/>
<path d="M438,2 L462,2 L450,12 Z" fill="#000" stroke="#c9ae6e" stroke-width="1.5"/>
<path d="M196.5,12.5 L219,12.5 L219,34 L207.7,43.5 L196.5,34 Z" fill="#000" stroke="#b9ae8e" stroke-width="1.5"/>
<path d="M201.5,19 L214,19 M207.7,19 L207.7,33.5" stroke="#e9d060" stroke-width="2.7" fill="none"/>
<path d="M0,229 L25.5,229 L36,240 L25.5,251 L0,251 Z" fill="#f0da2e"/>
</svg>
<!-- markers -->
<div class="mk" style="left:253.55px;top:88.25px;width:26.5px;height:26.5px;border:2px solid #acd2c6;color:#c6eee0;line-height:24.5px">X1</div>
<div class="mk" style="left:395.75px;top:88.05px;width:26.5px;height:26.5px;background:#b1ead8;color:#0c0c0c;line-height:26.5px">X2</div>
<div class="mk" style="left:39.15px;top:232.25px;width:26.5px;height:26.5px;border:2px solid #acd2c6;color:#c6eee0;line-height:24.5px">Y1</div>
<div class="mk" style="left:39.15px;top:320.55px;width:26.5px;height:26.5px;border:2px solid #acd2c6;color:#c6eee0;line-height:24.5px">Y2</div>
<svg class="a" style="left:0;top:270px" width="40" height="40"><path d="M11.5,17.3 L16.2,14.2 V27.3" fill="none" stroke="#111" stroke-width="2.8" stroke-linejoin="miter"/></svg>

<!-- dialog -->
<div class="a" style="left:492px;top:48.5px;width:407px;height:477.5px;background:#23262c;overflow:hidden;border-left:1px solid #62666b;border-right:1px solid #74777b">
  <div class="a" style="left:0;top:0;right:0;height:35.5px;background:#50555b"></div>
  <div class="a" style="left:0;top:35.5px;right:0;height:96px;background:#2e3138"></div>
  <div class="a" style="left:5px;top:131.5px;width:396px;height:1.5px;background:#121418"></div>
  <div class="a" style="left:0;right:0;top:8px;text-align:center;color:#f2f2f2;font-size:15px;line-height:18px">Cursor</div>
  <div class="a" style="left:374.5px;top:6.5px;width:22px;height:22px;border-radius:50%;background:#7b8086"></div>
  <svg class="a" style="left:374.5px;top:6.5px" width="22" height="22"><path d="M7.3,7.3 L14.7,14.7 M14.7,7.3 L7.3,14.7" stroke="#fff" stroke-width="2.2"/></svg>
  <div class="a" style="left:402.5px;top:132.5px;width:3px;height:259px;background:#9fc8c2"></div>
</div>
<div class="lbl" style="left:520px;width:73px;top:99px">Switch</div>
<div class="a" style="left:603px;top:94px;width:60px;height:30px;border-radius:15px;background:#030303"></div>
<div class="a" style="left:634.5px;top:96px;width:26px;height:26px;border-radius:50%;background:#a9c6c6"></div>
<div class="lbl" style="left:520px;width:73px;top:145px">Mode</div>
<div class="pill on" style="left:604px;top:138px;width:75px">Manual</div>
<div class="pill" style="left:689px;top:138px;width:53px;line-height:33px">Auto</div>
<div class="lbl" style="left:500px;width:93px;top:201px">Window</div>
<div class="pill on" style="left:604.5px;top:194px;width:56.5px">Main</div>
<div class="lbl" style="left:500px;width:93px;top:246.5px">Follow Line</div>
<div class="a" style="left:602.5px;top:240px;width:60px;height:30px;border-radius:15px;background:#030303"></div>
<div class="a" style="left:604.5px;top:242px;width:26px;height:26px;border-radius:50%;background:#585c62"></div>
<div class="lbl" style="left:500px;width:93px;top:292.5px">Source</div>
<div class="pill" style="left:602.5px;top:284.5px;width:100px;height:33px;line-height:33px;text-align:left;padding-left:30px">CH1</div>
<div class="a" style="left:688px;top:294px;width:1.5px;height:14px;background:#e8e8e8"></div>
<svg class="a" style="left:693px;top:297px" width="6" height="8"><path d="M1,1 L5,4 L1,7 Z" fill="#e8e8e8"/></svg>
<div class="lbl" style="left:500px;width:93px;top:341px">Type</div>
<div class="a" style="left:602.5px;top:324.5px;width:275px;height:49.5px;background:#050505"></div>
<div class="a" style="left:604px;top:326px;width:89px;height:46.5px;background:#4a4d53"></div>
<div class="a" style="left:695px;top:326px;width:89.5px;height:46.5px;background:#4a4d53"></div>
<div class="a" style="left:786px;top:326px;width:90px;height:46.5px;background:#a9c6c6"></div>
<svg class="a" style="left:604px;top:326px" width="272" height="47">
<rect x="26" y="4" width="36.5" height="21.5" fill="none" stroke="#f4f4f4" stroke-width="1.8"/>
<rect x="38" y="5" width="12" height="19.5" fill="#3d4045"/>
<line x1="38" y1="5" x2="38" y2="25" stroke="#f4f4f4" stroke-width="1.5" stroke-dasharray="1.5 1.5"/>
<line x1="50" y1="5" x2="50" y2="25" stroke="#f4f4f4" stroke-width="1.5" stroke-dasharray="1.5 1.5"/>
<rect x="117" y="4" width="36.5" height="21.5" fill="none" stroke="#f4f4f4" stroke-width="1.8"/>
<rect x="118" y="11" width="35" height="7.5" fill="#3d4045"/>
<line x1="118" y1="11" x2="153" y2="11" stroke="#f4f4f4" stroke-width="1.5" stroke-dasharray="1.5 1.5"/>
<line x1="118" y1="18.5" x2="153" y2="18.5" stroke="#f4f4f4" stroke-width="1.5" stroke-dasharray="1.5 1.5"/>
<rect x="208" y="4" width="36.5" height="21.5" fill="none" stroke="#111" stroke-width="1.8"/>
<g stroke="#111" stroke-width="1.3" stroke-dasharray="1.5 1.5"><line x1="209" y1="11" x2="244" y2="11"/><line x1="209" y1="18.5" x2="244" y2="18.5"/><line x1="220" y1="5" x2="220" y2="25"/><line x1="232" y1="5" x2="232" y2="25"/></g>
</svg>
<div class="a" style="left:604px;top:355px;width:89px;text-align:center;color:#f4f4f4;font-size:16px;line-height:18px">X</div>
<div class="a" style="left:695px;top:355px;width:89.5px;text-align:center;color:#f4f4f4;font-size:16px;line-height:18px">Y</div>
<div class="a" style="left:786px;top:355px;width:90px;text-align:center;color:#111;font-size:16px;line-height:18px">XY</div>
<div class="lbl" style="left:500px;width:93px;top:388px">Line</div>
<div class="pill" style="left:605px;top:382px;width:58px">Y1</div>
<div class="pill" style="left:672.5px;top:382px;width:58px">Y2</div>
<div class="pill" style="left:740px;top:382px;width:124px">Y1&amp;Y2</div>
<div class="pill" style="left:605px;top:423.5px;width:58px">X1</div>
<div class="pill on" style="left:672.5px;top:423.5px;width:58px;text-align:left;padding-left:30px">X2</div>
<div class="a" style="left:680.5px;top:432px;width:17.5px;height:16px;background:#e39c32;border-radius:2px;color:#2a1a08;font-size:15px;line-height:16px;text-align:center">M</div>
<div class="pill" style="left:740px;top:423.5px;width:124px">X1&amp;X2</div>
<div class="a" style="left:602.5px;top:475.5px;color:#f4f4f4;font-size:16px;line-height:18px">X2</div>
<div class="a" style="left:629.5px;top:465.5px;width:100.5px;height:34.5px;background:#cbcbcb;border-radius:3px;color:#080808;font-weight:bold;font-size:19px;line-height:34px;padding-left:5px">3.72div</div>
<!-- bottom clipped row -->
<div class="a" style="left:493px;top:500px;width:405px;height:26px;overflow:hidden">
 <div class="lbl" style="left:7px;width:93px;top:20px">X Unit</div>
 <div class="pill on" style="left:112px;top:14px;width:49px">s</div>
 <div class="pill" style="left:172px;top:14px;width:49px">Hz</div>
 <div class="pill" style="left:232.5px;top:14px;width:96px">Degree(°)</div>
</div>

<!-- right panel -->
<div class="a" style="left:899px;top:48.5px;width:3px;height:479px;background:#1f2125"></div>
<div class="a" style="left:902px;top:48.5px;width:121px;height:14px;background:#1b1d21"></div>
<div class="rp" style="top:62px;height:20.5px;background:#4d5259;border-radius:4px 4px 0 0"></div>
<div class="a" style="left:896px;top:63.3px;width:120px;text-align:center;color:#fff;font-weight:bold;font-size:14px;line-height:19px">AFG</div>
<svg class="a" style="left:999px;top:68px" width="14" height="8"><path d="M0.5,7.5 L7,0.5 L13.5,7.5 Z" fill="#f2f2f2"/></svg>
<div class="rp" style="top:82.5px;height:81px;background:#2b2e34"></div>
<div class="a" style="left:904px;top:84.5px;width:117px;height:77px;border:1.5px solid #3b3e45;border-radius:4px"></div>
<div class="a" style="left:908.5px;top:90.5px;width:25px;height:13px;border-radius:7px;background:#6b6e73;color:#0e0e0e;font-weight:bold;font-size:13px;line-height:13px;text-align:center">1</div>
<div class="a" style="left:978px;top:88px;width:38px;height:16px;background:#050505"></div>
<svg class="a" style="left:978px;top:88px" width="38" height="16"><path d="M9.5,12.8 H13.2 V2.6 H18.7 V12.8 H28" fill="none" stroke="#d8d8d8" stroke-width="1.1"/></svg>
<div class="a" style="left:910px;top:106.5px;color:#5d6066;font-weight:bold;font-size:13.5px;line-height:16px">1.000,000kHz</div>
<div class="a" style="left:910px;top:125.5px;color:#5d6066;font-weight:bold;font-size:13.5px;line-height:16px">1.000Vpp</div>
<div class="a" style="left:910px;top:144.5px;color:#5d6066;font-weight:bold;font-size:13.5px;line-height:16px">0mV</div>
<div class="a" style="left:902px;top:163.5px;width:120px;height:3px;background:#1b1d21"></div>
<div class="rp" style="top:166.5px;height:21px;background:#4d5259;border-radius:4px 4px 0 0"></div>
<div class="a" style="left:902px;top:168px;width:120px;text-align:center;color:#fff;font-weight:bold;font-size:14px;line-height:19px">LA</div>
<div class="rp" style="top:187.5px;height:77px;background:#2b2e34"></div>
<div class="dl" style="left:903px;top:190px">D0</div><div class="dl" style="left:933px;top:190px">D1</div><div class="dl" style="left:963px;top:190px">D2</div><div class="dl" style="left:993px;top:190px">D3</div>
<div class="dl" style="left:903px;top:208.5px">D4</div><div class="dl" style="left:933px;top:208.5px">D5</div><div class="dl" style="left:963px;top:208.5px">D6</div><div class="dl" style="left:993px;top:208.5px">D7</div>
<div class="dl" style="left:903px;top:227px">D8</div><div class="dl" style="left:933px;top:227px">D9</div><div class="dl" style="left:963px;top:227px">D10</div><div class="dl" style="left:993px;top:227px">D11</div>
<div class="dl" style="left:903px;top:245.5px">D12</div><div class="dl" style="left:933px;top:245.5px">D13</div><div class="dl" style="left:963px;top:245.5px">D14</div><div class="dl" style="left:993px;top:245.5px">D15</div>
<div class="rp" style="top:265px;height:20.5px;background:#a9c6c6;border-radius:4px 4px 0 0"></div>
<div class="a" style="left:902px;top:267px;width:120px;text-align:center;color:#0a0a0a;font-weight:bold;font-size:13.5px;line-height:17px">Cursor</div>
<div class="a" style="left:996.5px;top:268.5px;width:21px;height:14.5px;border-radius:7.5px;background:#f1e23a;color:#111;font-size:12px;line-height:14.5px;text-align:center">1</div>
<div class="rp" style="top:285.5px;height:146px;background:#2b2e34"></div>
<div class="cv" style="top:289px">Y1:10.00V</div>
<div class="cv" style="top:310px">Y2:-10.00V</div>
<div class="cv" style="top:330.5px"><svg width="14" height="11" style="display:inline-block;vertical-align:0px;margin-right:0.5px"><path d="M7,0.8 L13.2,10.4 L0.8,10.4 Z" fill="none" stroke="#ececec" stroke-width="1.1"/></svg>Y:20.00V</div>
<div class="cv" style="top:351px">X1:172.0μs</div>
<div class="cv" style="top:372px">X2:744.0μs</div>
<div class="cv" style="top:392.5px"><svg width="14" height="11" style="display:inline-block;vertical-align:0px;margin-right:0.5px"><path d="M7,0.8 L13.2,10.4 L0.8,10.4 Z" fill="none" stroke="#ececec" stroke-width="1.1"/></svg>X:572.0μs</div>
<div class="cv" style="top:413.5px">1/<svg width="14" height="11" style="display:inline-block;vertical-align:0px;margin-right:0.5px"><path d="M7,0.8 L13.2,10.4 L0.8,10.4 Z" fill="none" stroke="#ececec" stroke-width="1.1"/></svg>X:1.748kHz</div>
<div class="a" style="left:902px;top:518px;width:121px;height:11px;background:#2a2d33"></div>

<!-- bottom bar -->
<div class="a" style="left:1px;top:528px;width:1022px;height:71px;background:#121212"></div>
<div class="chp" style="left:1px;width:102px">
 <div class="hd" style="background:#f1e33a"></div><div class="bd" style="background:#c8c9cc"></div>
 <div class="t" style="left:2.5px;top:5px;color:#0a0a0a">CH1</div>
 <div class="a" style="left:57.5px;top:3px;width:42.5px;height:17.5px;background:#050505;border-radius:2.5px;letter-spacing:-0.45px;color:#f1e33a;font-weight:bold;font-size:13px;line-height:17.5px;text-align:center">10.00X</div>
 <div class="v" style="left:1.5px;top:27px;color:#0a0a0a">10.00V</div>
 <div class="v" style="left:1.5px;top:46.7px;color:#0a0a0a">0.00div</div>
 <svg class="a" style="left:88px;top:32.5px" width="14" height="10"><rect x="1" y="1" width="11" height="2" fill="#111"/><rect x="1" y="5" width="2.5" height="2" fill="#111"/><rect x="5.3" y="5" width="2.5" height="2" fill="#111"/><rect x="9.5" y="5" width="2.5" height="2" fill="#111"/></svg>
</div>
<div class="chp" style="left:105px;width:102px">
 <div class="hd"></div><div class="bd"></div>
 <div class="t" style="left:2.5px;top:5px;color:#84878c">CH2</div>
 <div class="a" style="left:57.5px;top:3px;width:42.5px;height:17.5px;background:#050505;border-radius:2.5px;letter-spacing:-0.45px;color:#7e8186;font-weight:bold;font-size:13px;line-height:17.5px;text-align:center">10.00X</div>
 <div class="v" style="left:1.5px;top:27px;color:#5e6166">1.000V</div>
 <div class="v" style="left:1.5px;top:46.7px;color:#5e6166">-0.22div</div>
 <svg class="a" style="left:88px;top:32.5px" width="14" height="10"><rect x="1" y="1" width="11" height="2" fill="#777"/><rect x="1" y="5" width="2.5" height="2" fill="#777"/><rect x="5.3" y="5" width="2.5" height="2" fill="#777"/><rect x="9.5" y="5" width="2.5" height="2" fill="#777"/></svg>
</div>
<div class="chp" style="left:209px;width:102px">
 <div class="hd"></div><div class="bd"></div>
 <div class="t" style="left:2.5px;top:5px;color:#84878c">CH3</div>
 <div class="a" style="left:57.5px;top:3px;width:42.5px;height:17.5px;background:#050505;border-radius:2.5px;letter-spacing:-0.45px;color:#7e8186;font-weight:bold;font-size:13px;line-height:17.5px;text-align:center">10.00X</div>
 <div class="v" style="left:1.5px;top:27px;color:#5e6166">1.000V</div>
 <div class="v" style="left:1.5px;top:46.7px;color:#5e6166">-1.50div</div>
 <svg class="a" style="left:88px;top:32.5px" width="14" height="10"><rect x="1" y="1" width="11" height="2" fill="#777"/><rect x="1" y="5" width="2.5" height="2" fill="#777"/><rect x="5.3" y="5" width="2.5" height="2" fill="#777"/><rect x="9.5" y="5" width="2.5" height="2" fill="#777"/></svg>
</div>
<div class="chp" style="left:313px;width:102px">
 <div class="hd"></div><div class="bd"></div>
 <div class="t" style="left:2.5px;top:5px;color:#84878c">CH4</div>
 <div class="a" style="left:57.5px;top:3px;width:42.5px;height:17.5px;background:#050505;border-radius:2.5px;letter-spacing:-0.45px;color:#7e8186;font-weight:bold;font-size:13px;line-height:17.5px;text-align:center">10.00X</div>
 <div class="v" style="left:1.5px;top:27px;color:#5e6166">1.000V</div>
 <div class="v" style="left:1.5px;top:46.7px;color:#5e6166">-2.80div</div>
 <svg class="a" style="left:88px;top:32.5px" width="14" height="10"><rect x="1" y="1" width="11" height="2" fill="#777"/><rect x="1" y="5" width="2.5" height="2" fill="#777"/><rect x="5.3" y="5" width="2.5" height="2" fill="#777"/><rect x="9.5" y="5" width="2.5" height="2" fill="#777"/></svg>
</div>
<div class="chp" style="left:416px;width:80.5px">
 <div class="hd" style="background:#4b4f55"></div><div class="bd" style="background:#c8c9cc"></div>
 <div class="t" style="left:1.5px;top:2px;color:#fff">Horizontal</div>
 <div class="v" style="left:1.5px;top:27px;color:#0a0a0a">200.0μs</div>
 <div class="v" style="left:1.5px;top:46.7px;color:#0a0a0a">972.0μs</div>
</div>
<div class="chp" style="left:498px;width:90px">
 <div class="hd" style="background:#4b4f55"></div><div class="bd" style="background:#c8c9cc"></div>
 <div class="t" style="left:1.5px;top:2px;color:#fff">Acquire</div>
 <div class="v" style="left:1.5px;top:27px;color:#0a0a0a">2.5MSa/s</div>
 <div class="v" style="left:1.5px;top:46.7px;color:#0a0a0a">10k</div>
</div>
<div class="chp" style="left:590px;width:110px">
 <div class="hd" style="background:#4b4f55;height:21px"></div><div class="bd" style="background:#c8c9cc;top:21px"></div>
 <div class="t" style="left:1.5px;top:2px;color:#fff">Edge</div>
 <div class="a" style="left:77.5px;top:3.5px;width:27.5px;height:15.5px;border-radius:8px;background:#f1e33a;color:#111;font-size:12px;line-height:15.5px;text-align:center">1</div>
 <div class="v" style="left:1.5px;top:27px;color:#0a0a0a">DC</div>
 <svg class="a" style="left:25.5px;top:27px" width="16" height="16"><path d="M1,13.5 H6 L10,2 H14.5" fill="none" stroke="#111" stroke-width="1.8"/></svg>
 <div class="v" style="left:1.5px;top:46.7px;color:#0a0a0a">0.000pV</div>
</div>
<!-- home -->
<div class="a" style="left:964px;top:530px;width:58px;height:68px;background:#3a3d44"></div>
<svg class="a" style="left:964px;top:530px" width="58" height="68">
<path d="M0,28 L29,21.5 L58,28 V68 H0 Z" fill="#50555c"/>
<path d="M22,13.5 L29,7 L36,13.5 Z" fill="#e8b834"/>
<path d="M18.5,47 L29,37 L39.5,47 M20.5,45 V61 H37.5 V45 M26,61 V51 H32 V61" fill="none" stroke="#e8c040" stroke-width="1.8"/>
</svg>
</body></html>
